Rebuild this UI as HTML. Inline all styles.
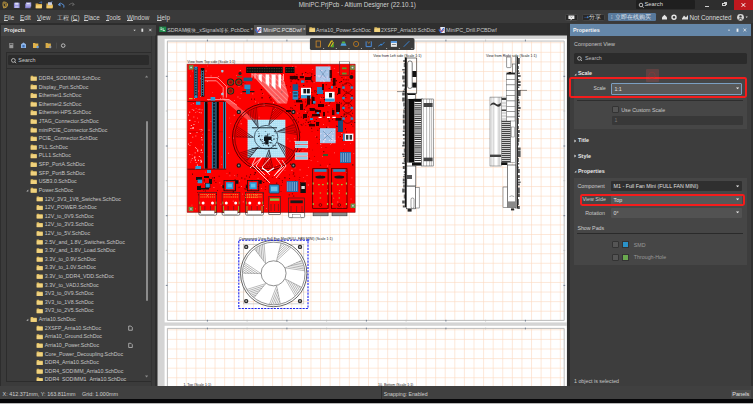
<!DOCTYPE html>
<html><head><meta charset="utf-8">
<style>
*{margin:0;padding:0;box-sizing:border-box}
html,body{width:753px;height:404px;overflow:hidden;background:#2d2d2d;font-family:"Liberation Sans",sans-serif;color:#d6d6d6}
.a{position:absolute}
.t{position:absolute;white-space:nowrap;line-height:1}
</style></head><body>
<!-- title bar -->
<div class="a" style="left:0;top:0;width:753px;height:9.8px;background:#2e2e2e"></div>
<div class="t" style="left:298.7px;top:2.2px;font-size:6.3px;color:#d2d2d2">MiniPC.PrjPcb - Altium Designer (22.10.1)</div>
<!-- title icons -->
<svg class="a" style="left:0;top:0" width="80" height="10" viewBox="0 0 80 10">
 <path d="M3.4 2 Q7.8 2.2 7.6 5 Q7.4 7.8 3.6 8 M4.4 3.4 Q6.4 3.8 6.2 5.1 Q6 6.4 4.4 6.6 M3.2 2.2 Q2.6 5 3.6 7.8" stroke="#cfa440" stroke-width="0.95" fill="none"/>
 <rect x="13.9" y="2.7" width="5.7" height="5.3" fill="#8f8cd8"/><rect x="15.1" y="2.7" width="3.3" height="2" fill="#dcdcf4"/><rect x="15" y="5.6" width="3.5" height="2.4" fill="#b8b6ea"/>
 <rect x="25.2" y="3.6" width="5.4" height="4.6" fill="#8884d0"/><rect x="26" y="2.4" width="5.2" height="4.2" fill="#a9a6e4"/><rect x="26.8" y="3" width="3" height="1.2" fill="#e4e4f6"/>
 <path d="M35.6 3.4h2.4l.6.7h3.4v4.1h-6.4z" fill="#d9ad4a"/><path d="M36 5.2h6.2l-.8 3h-5.6z" fill="#f2d07a"/><path d="M39.4 2.6 L41.8 1.8 L41.4 3.6" stroke="#4a7ac8" stroke-width="0.7" fill="none"/>
 <path d="M46.4 3.6h2.4l.6.7h3.4v4h-6.4z" fill="#d0a848"/><rect x="48" y="2.2" width="4" height="3.2" fill="#c8cce0"/><path d="M46.8 5.4h6.2l-.8 2.8h-5.6z" fill="#eec666"/><path d="M50.6 2.2 L52.6 1.4" stroke="#4a7ac8" stroke-width="0.6"/>
 <path d="M58.8 4.6 Q61.8 2.2 64 5.4 L63.8 7.6 M58.4 4.8 l1.9-2.1 M58.4 4.8 l2.3 1" stroke="#5a94dc" stroke-width="1" fill="none"/>
 <path d="M74 4.4 Q71 2.2 68.8 5 M74.3 4.6 l-1.8-2 M74.3 4.6 l-2.2 .9" stroke="#666" stroke-width="0.9" fill="none"/>
</svg>
<!-- search in title -->
<div class="a" style="left:636px;top:0;width:59px;height:9.3px;background:#1f1f1f;border-radius:1px"></div>
<svg class="a" style="left:638px;top:1.5px" width="6" height="7"><circle cx="3" cy="3" r="1.8" stroke="#ddd" stroke-width="0.8" fill="none"/><path d="M4.3 4.4 L5.6 5.8" stroke="#ddd" stroke-width="0.8"/></svg>
<div class="t" style="left:644.5px;top:2px;font-size:5.8px;color:#dcdcdc">Search</div>
<div class="a" style="left:705px;top:6.4px;width:4px;height:0.9px;background:#cfcfcf"></div>
<div class="a" style="left:722.4px;top:2.7px;width:4px;height:3.6px;border:0.8px solid #cfcfcf"></div>
<div class="a" style="left:723.6px;top:1.9px;width:3.6px;height:3.2px;border-top:0.8px solid #cfcfcf;border-right:0.8px solid #cfcfcf"></div>
<div class="a" style="left:734px;top:0;width:19px;height:10.5px;background:#c0181e"></div>
<svg class="a" style="left:734px;top:0" width="19" height="11"><path d="M7.6 3.2 L11.2 6.8 M11.2 3.2 L7.6 6.8" stroke="#fff" stroke-width="1"/></svg>

<!-- menu bar -->
<div class="a" style="left:0;top:9.8px;width:753px;height:13.2px;background:#3a3a3a"></div>
<div class="t" style="left:4px;top:14.6px;font-size:6.3px;color:#d2d2d2"><u style="text-decoration-thickness:0.45px;text-underline-offset:0.35px">F</u>ile</div>
<div class="t" style="left:20px;top:14.6px;font-size:6.3px;color:#d2d2d2"><u style="text-decoration-thickness:0.45px;text-underline-offset:0.35px">E</u>dit</div>
<div class="t" style="left:37px;top:14.6px;font-size:6.3px;color:#d2d2d2"><u style="text-decoration-thickness:0.45px;text-underline-offset:0.35px">V</u>iew</div>
<div class="t" style="left:57px;top:14.6px;font-size:6.3px;color:#d2d2d2">工程 (<u style="text-decoration-thickness:0.45px;text-underline-offset:0.35px">C</u>)</div>
<div class="t" style="left:84px;top:14.6px;font-size:6.3px;color:#d2d2d2"><u style="text-decoration-thickness:0.45px;text-underline-offset:0.35px">P</u>lace</div>
<div class="t" style="left:106px;top:14.6px;font-size:6.3px;color:#d2d2d2"><u style="text-decoration-thickness:0.45px;text-underline-offset:0.35px">T</u>ools</div>
<div class="t" style="left:127px;top:14.6px;font-size:6.3px;color:#d2d2d2"><u style="text-decoration-thickness:0.45px;text-underline-offset:0.35px">W</u>indow</div>
<div class="t" style="left:157px;top:14.6px;font-size:6.3px;color:#d2d2d2"><u style="text-decoration-thickness:0.45px;text-underline-offset:0.35px">H</u>elp</div>
<!-- menu right -->
<div class="a" style="left:565.3px;top:13.6px;width:13px;height:7.6px;background:#282828;border:0.6px solid #474747;border-radius:1.2px"></div>
<svg class="a" style="left:565.3px;top:13.6px" width="13" height="8"><path d="M3.4 1.6h6v3.4H7.2L5.6 6.4V5H3.4z" fill="#ececec"/><path d="M5.6 2.6l.8.9.8-.9" stroke="#333" stroke-width="0.5" fill="none"/></svg>
<div class="a" style="left:582px;top:13.6px;width:22.6px;height:7.6px;background:#282828;border:0.6px solid #444;border-radius:1.2px"></div>
<div class="t" style="left:584px;top:14.6px;font-size:5.6px;color:#d8d8d8"><span style="color:#5a9be0">➝</span>分享</div>
<div class="a" style="left:608px;top:13.3px;width:47.6px;height:8px;background:#58799c;border-radius:1.2px"></div>
<div class="t" style="left:611px;top:14.6px;font-size:5.6px;color:#e0e6ee">⁝ 立即在线购买</div>
<svg class="a" style="left:660px;top:13px" width="20" height="8"><path d="M2 4.2 L4.5 1.8 L7 4.2 V6.6 H2z" fill="#e6e6e6"/><circle cx="14" cy="4.2" r="2" fill="none" stroke="#e6e6e6" stroke-width="1.4"/></svg>
<svg class="a" style="left:681px;top:13px" width="8" height="8"><path d="M1 5.6 L3 2.4 L5 4.4 L7 2 V6.4 H1z" fill="#e0e0e0"/></svg>
<div class="t" style="left:689.5px;top:14.5px;font-size:6.3px;color:#dcdcdc">Not Connected</div>
<svg class="a" style="left:736px;top:12.5px" width="14" height="9"><circle cx="4.5" cy="4.3" r="3.4" fill="#d8d8d8"/><circle cx="4.5" cy="3.4" r="1.2" fill="#3a3a3a"/><path d="M2.6 6.4 Q4.5 4.6 6.4 6.4" stroke="#3a3a3a" stroke-width="1" fill="none"/><path d="M9.6 3.6 L11.8 3.6 L10.7 5z" fill="#d8d8d8"/></svg>

<!-- LEFT PANEL -->
<div class="a" style="left:1px;top:24.5px;width:155px;height:11.5px;background:#454545"></div>
<div class="t" style="left:4px;top:28.2px;font-size:5.4px;font-weight:bold;color:#e4e4e4">Projects</div>
<svg class="a" style="left:130px;top:26px" width="28" height="9"><path d="M3.4 3.8 h2.4 l-1.2 1.3z" fill="#ddd"/><rect x="11.4" y="2.6" width="1.8" height="3.2" fill="#ddd"/><path d="M19.2 2.8 L21.4 5.2 M21.4 2.8 L19.2 5.2" stroke="#ddd" stroke-width="0.75"/></svg>
<div class="a" style="left:1px;top:36px;width:155px;height:350px;background:#3b3b3b"></div>
<svg class="a" style="left:0;top:37px" width="70" height="14">
 <rect x="9.3" y="6" width="4" height="5.2" fill="#9a9a9a"/><rect x="10" y="6.6" width="2.6" height="1.4" fill="#555"/>
 <path d="M21 7.2 L23.5 5.6 L26 7.2 V11 H21z" fill="#8fb5e6"/><rect x="22.4" y="8" width="2.2" height="2.4" fill="#3d6fb8"/>
 <path d="M33 6h2l.5.6h2.8v4.4H33z" fill="#e0b24a"/><circle cx="37.6" cy="10" r="1.2" fill="#6aa0e0"/>
 <path d="M45.6 6h2l.5.6h2.8v4.4h-5.3z" fill="#d8ac48"/><circle cx="50.2" cy="10" r="1.2" fill="#999"/>
 <rect x="56" y="5.6" width="0.6" height="6" fill="#555"/>
 <circle cx="63.2" cy="8.6" r="1.8" fill="none" stroke="#c8c8c8" stroke-width="0.9"/>
</svg>
<div class="a" style="left:5.5px;top:52px;width:146px;height:330px;border:0.8px solid #2c2c2c"></div>
<div class="a" style="left:8px;top:55px;width:141px;height:10.4px;background:#2b2b2b;border-radius:1.5px"></div>
<svg class="a" style="left:10px;top:56.5px" width="8" height="8"><circle cx="3.4" cy="3.4" r="1.9" stroke="#ccc" stroke-width="0.8" fill="none"/><path d="M4.7 4.7 L6.2 6.2" stroke="#ccc" stroke-width="0.8"/></svg>
<div class="t" style="left:18.3px;top:58px;font-size:5.4px;color:#c9c9c9">Search</div>
<div class="a" style="left:6px;top:68.2px;width:145px;height:0.8px;background:#2c2c2c"></div>
<div class="a" style="left:6.3px;top:69px;width:138px;height:312.3px;overflow:hidden">
<svg class="a" style="left:0;top:0" width="138" height="313">
<path d="M24.7 6.85h2.2l.5.6h3.3v4.3h-6z" fill="#d9b85c"/><rect x="24.7" y="8.05" width="6" height="3.5" fill="#f0d27e"/>
<path d="M24.7 15.46h2.2l.5.6h3.3v4.3h-6z" fill="#d9b85c"/><rect x="24.7" y="16.66" width="6" height="3.5" fill="#f0d27e"/>
<path d="M24.7 24.08h2.2l.5.6h3.3v4.3h-6z" fill="#d9b85c"/><rect x="24.7" y="25.28" width="6" height="3.5" fill="#f0d27e"/>
<path d="M24.7 32.69h2.2l.5.6h3.3v4.3h-6z" fill="#d9b85c"/><rect x="24.7" y="33.89" width="6" height="3.5" fill="#f0d27e"/>
<path d="M24.7 41.31h2.2l.5.6h3.3v4.3h-6z" fill="#d9b85c"/><rect x="24.7" y="42.51" width="6" height="3.5" fill="#f0d27e"/>
<path d="M24.7 49.92h2.2l.5.6h3.3v4.3h-6z" fill="#d9b85c"/><rect x="24.7" y="51.12" width="6" height="3.5" fill="#f0d27e"/>
<path d="M24.7 58.53h2.2l.5.6h3.3v4.3h-6z" fill="#d9b85c"/><rect x="24.7" y="59.73" width="6" height="3.5" fill="#f0d27e"/>
<path d="M24.7 67.15h2.2l.5.6h3.3v4.3h-6z" fill="#d9b85c"/><rect x="24.7" y="68.35" width="6" height="3.5" fill="#f0d27e"/>
<path d="M24.7 75.76h2.2l.5.6h3.3v4.3h-6z" fill="#d9b85c"/><rect x="24.7" y="76.96" width="6" height="3.5" fill="#f0d27e"/>
<path d="M24.7 84.38h2.2l.5.6h3.3v4.3h-6z" fill="#d9b85c"/><rect x="24.7" y="85.58" width="6" height="3.5" fill="#f0d27e"/>
<path d="M24.7 92.99h2.2l.5.6h3.3v4.3h-6z" fill="#d9b85c"/><rect x="24.7" y="94.19" width="6" height="3.5" fill="#f0d27e"/>
<path d="M24.7 101.60h2.2l.5.6h3.3v4.3h-6z" fill="#d9b85c"/><rect x="24.7" y="102.80" width="6" height="3.5" fill="#f0d27e"/>
<path d="M24.7 110.22h2.2l.5.6h3.3v4.3h-6z" fill="#d9b85c"/><rect x="24.7" y="111.42" width="6" height="3.5" fill="#f0d27e"/>
<path d="M24.7 118.83h2.2l.5.6h3.3v4.3h-6z" fill="#d9b85c"/><rect x="24.7" y="120.03" width="6" height="3.5" fill="#f0d27e"/>
<path d="M20.3 122.43l2-2v2z" fill="#bdbdbd"/>
<path d="M30.7 127.45h2.2l.5.6h3.3v4.3h-6z" fill="#d9b85c"/><rect x="30.7" y="128.65" width="6" height="3.5" fill="#f0d27e"/>
<path d="M30.7 136.06h2.2l.5.6h3.3v4.3h-6z" fill="#d9b85c"/><rect x="30.7" y="137.26" width="6" height="3.5" fill="#f0d27e"/>
<path d="M30.7 144.67h2.2l.5.6h3.3v4.3h-6z" fill="#d9b85c"/><rect x="30.7" y="145.87" width="6" height="3.5" fill="#f0d27e"/>
<path d="M30.7 153.29h2.2l.5.6h3.3v4.3h-6z" fill="#d9b85c"/><rect x="30.7" y="154.49" width="6" height="3.5" fill="#f0d27e"/>
<path d="M30.7 161.90h2.2l.5.6h3.3v4.3h-6z" fill="#d9b85c"/><rect x="30.7" y="163.10" width="6" height="3.5" fill="#f0d27e"/>
<path d="M30.7 170.52h2.2l.5.6h3.3v4.3h-6z" fill="#d9b85c"/><rect x="30.7" y="171.72" width="6" height="3.5" fill="#f0d27e"/>
<path d="M30.7 179.13h2.2l.5.6h3.3v4.3h-6z" fill="#d9b85c"/><rect x="30.7" y="180.33" width="6" height="3.5" fill="#f0d27e"/>
<path d="M30.7 187.74h2.2l.5.6h3.3v4.3h-6z" fill="#d9b85c"/><rect x="30.7" y="188.94" width="6" height="3.5" fill="#f0d27e"/>
<path d="M30.7 196.36h2.2l.5.6h3.3v4.3h-6z" fill="#d9b85c"/><rect x="30.7" y="197.56" width="6" height="3.5" fill="#f0d27e"/>
<path d="M30.7 204.97h2.2l.5.6h3.3v4.3h-6z" fill="#d9b85c"/><rect x="30.7" y="206.17" width="6" height="3.5" fill="#f0d27e"/>
<path d="M30.7 213.59h2.2l.5.6h3.3v4.3h-6z" fill="#d9b85c"/><rect x="30.7" y="214.79" width="6" height="3.5" fill="#f0d27e"/>
<path d="M30.7 222.20h2.2l.5.6h3.3v4.3h-6z" fill="#d9b85c"/><rect x="30.7" y="223.40" width="6" height="3.5" fill="#f0d27e"/>
<path d="M30.7 230.81h2.2l.5.6h3.3v4.3h-6z" fill="#d9b85c"/><rect x="30.7" y="232.01" width="6" height="3.5" fill="#f0d27e"/>
<path d="M30.7 239.43h2.2l.5.6h3.3v4.3h-6z" fill="#d9b85c"/><rect x="30.7" y="240.63" width="6" height="3.5" fill="#f0d27e"/>
<path d="M24.7 248.04h2.2l.5.6h3.3v4.3h-6z" fill="#d9b85c"/><rect x="24.7" y="249.24" width="6" height="3.5" fill="#f0d27e"/>
<path d="M20.3 251.64l2-2v2z" fill="#bdbdbd"/>
<path d="M30.7 256.66h2.2l.5.6h3.3v4.3h-6z" fill="#d9b85c"/><rect x="30.7" y="257.86" width="6" height="3.5" fill="#f0d27e"/>
<path d="M122.7 257.06h2.2l1.4 1.4v2.8h-3.6z" fill="none" stroke="#cfcfcf" stroke-width="0.7"/>
<path d="M30.7 265.27h2.2l.5.6h3.3v4.3h-6z" fill="#d9b85c"/><rect x="30.7" y="266.47" width="6" height="3.5" fill="#f0d27e"/>
<path d="M30.7 273.88h2.2l.5.6h3.3v4.3h-6z" fill="#d9b85c"/><rect x="30.7" y="275.08" width="6" height="3.5" fill="#f0d27e"/>
<path d="M122.7 274.28h2.2l1.4 1.4v2.8h-3.6z" fill="none" stroke="#cfcfcf" stroke-width="0.7"/>
<path d="M30.7 282.50h2.2l.5.6h3.3v4.3h-6z" fill="#d9b85c"/><rect x="30.7" y="283.70" width="6" height="3.5" fill="#f0d27e"/>
<path d="M30.7 291.11h2.2l.5.6h3.3v4.3h-6z" fill="#d9b85c"/><rect x="30.7" y="292.31" width="6" height="3.5" fill="#f0d27e"/>
<path d="M30.7 299.73h2.2l.5.6h3.3v4.3h-6z" fill="#d9b85c"/><rect x="30.7" y="300.93" width="6" height="3.5" fill="#f0d27e"/>
<path d="M30.7 308.34h2.2l.5.6h3.3v4.3h-6z" fill="#d9b85c"/><rect x="30.7" y="309.54" width="6" height="3.5" fill="#f0d27e"/>
</svg>
<div class="t" style="left:32.5px;top:6.90px;font-size:5.25px;color:#c6c6c6">DDR4_SODIMM2.SchDoc</div>
<div class="t" style="left:32.5px;top:15.51px;font-size:5.25px;color:#c6c6c6">Display_Port.SchDoc</div>
<div class="t" style="left:32.5px;top:24.13px;font-size:5.25px;color:#c6c6c6">Ethernet1.SchDoc</div>
<div class="t" style="left:32.5px;top:32.74px;font-size:5.25px;color:#c6c6c6">Ethernet2.SchDoc</div>
<div class="t" style="left:32.5px;top:41.36px;font-size:5.25px;color:#c6c6c6">Ethernet-HPS.SchDoc</div>
<div class="t" style="left:32.5px;top:49.97px;font-size:5.25px;color:#c6c6c6">JTAG_Connector.SchDoc</div>
<div class="t" style="left:32.5px;top:58.58px;font-size:5.25px;color:#c6c6c6">miniPCIE_Connector.SchDoc</div>
<div class="t" style="left:32.5px;top:67.20px;font-size:5.25px;color:#c6c6c6">PCIE_Connector.SchDoc</div>
<div class="t" style="left:32.5px;top:75.81px;font-size:5.25px;color:#c6c6c6">PLL.SchDoc</div>
<div class="t" style="left:32.5px;top:84.43px;font-size:5.25px;color:#c6c6c6">PLL1.SchDoc</div>
<div class="t" style="left:32.5px;top:93.04px;font-size:5.25px;color:#c6c6c6">SFP_PortA.SchDoc</div>
<div class="t" style="left:32.5px;top:101.65px;font-size:5.25px;color:#c6c6c6">SFP_PortB.SchDoc</div>
<div class="t" style="left:32.5px;top:110.27px;font-size:5.25px;color:#c6c6c6">USB3.0.SchDoc</div>
<div class="t" style="left:32.5px;top:118.88px;font-size:5.25px;color:#c6c6c6">Power.SchDoc</div>
<div class="t" style="left:38.5px;top:127.50px;font-size:5.25px;color:#c6c6c6">12V_3V3_1V8_Swiches.SchDoc</div>
<div class="t" style="left:38.5px;top:136.11px;font-size:5.25px;color:#c6c6c6">12V_POWER.SchDoc</div>
<div class="t" style="left:38.5px;top:144.72px;font-size:5.25px;color:#c6c6c6">12V_to_0V9.SchDoc</div>
<div class="t" style="left:38.5px;top:153.34px;font-size:5.25px;color:#c6c6c6">12V_to_3V3.SchDoc</div>
<div class="t" style="left:38.5px;top:161.95px;font-size:5.25px;color:#c6c6c6">12V_to_5V.SchDoc</div>
<div class="t" style="left:38.5px;top:170.57px;font-size:5.25px;color:#c6c6c6">2.5V_and_1.8V_Switches.SchDoc</div>
<div class="t" style="left:38.5px;top:179.18px;font-size:5.25px;color:#c6c6c6">3.3V_and_1.8V_Load.SchDoc</div>
<div class="t" style="left:38.5px;top:187.79px;font-size:5.25px;color:#c6c6c6">3.3V_to_0.9V.SchDoc</div>
<div class="t" style="left:38.5px;top:196.41px;font-size:5.25px;color:#c6c6c6">3.3V_to_1.0V.SchDoc</div>
<div class="t" style="left:38.5px;top:205.02px;font-size:5.25px;color:#c6c6c6">3.3V_to_DDR4_VDD.SchDoc</div>
<div class="t" style="left:38.5px;top:213.64px;font-size:5.25px;color:#c6c6c6">3.3V_to_VADJ.SchDoc</div>
<div class="t" style="left:38.5px;top:222.25px;font-size:5.25px;color:#c6c6c6">3V3_to_0V9.SchDoc</div>
<div class="t" style="left:38.5px;top:230.86px;font-size:5.25px;color:#c6c6c6">3V3_to_1V8.SchDoc</div>
<div class="t" style="left:38.5px;top:239.48px;font-size:5.25px;color:#c6c6c6">3V3_to_2V5.SchDoc</div>
<div class="t" style="left:32.5px;top:248.09px;font-size:5.25px;color:#c6c6c6">Arria10.SchDoc</div>
<div class="t" style="left:38.5px;top:256.71px;font-size:5.25px;color:#c6c6c6">2XSFP_Arria10.SchDoc</div>
<div class="t" style="left:38.5px;top:265.32px;font-size:5.25px;color:#c6c6c6">Arria10_Ground.SchDoc</div>
<div class="t" style="left:38.5px;top:273.93px;font-size:5.25px;color:#c6c6c6">Arria10_Power.SchDoc</div>
<div class="t" style="left:38.5px;top:282.55px;font-size:5.25px;color:#c6c6c6">Core_Power_Decoupling.SchDoc</div>
<div class="t" style="left:38.5px;top:291.16px;font-size:5.25px;color:#c6c6c6">DDR4_Arria10.SchDoc</div>
<div class="t" style="left:38.5px;top:299.78px;font-size:5.25px;color:#c6c6c6">DDR4_SODIMM_Arria10.SchDoc</div>
<div class="t" style="left:38.5px;top:308.39px;font-size:5.25px;color:#c6c6c6">DDR4_SODIMM1_Arria10.SchDoc</div>
</div>
<!-- scrollbar -->
<svg class="a" style="left:144px;top:74px" width="6" height="5"><path d="M1 3.6 L2.6 1.6 L4.2 3.6z" fill="#8a8a8a"/></svg>
<div class="a" style="left:145.6px;top:120.6px;width:2.6px;height:180.4px;background:#8c8c8c;border-radius:1.3px"></div>
<svg class="a" style="left:144px;top:374px" width="6" height="5"><path d="M1 1.4 L2.6 3.4 L4.2 1.4z" fill="#8a8a8a"/></svg>
<div class="a" style="left:150.8px;top:36px;width:0.8px;height:350px;background:#333"></div>

<!-- TABS -->
<div class="a" style="left:156px;top:23px;width:411px;height:12.5px;background:#2f2f2f"></div>
<div class="a" style="left:254.2px;top:24.9px;width:52.2px;height:10.6px;background:#555"></div>
<svg class="a" style="left:156px;top:23px" width="411" height="13">
 <rect x="3.2" y="3.6" width="7" height="5.4" fill="#1e8a4a"/><path d="M4.4 5h1.6M4.4 6.6h1.6M7 5v2.6h2" stroke="#e6f4ea" stroke-width="0.8" fill="none"/>
 <rect x="100.9" y="4" width="4.5" height="6" fill="#e8ecf8"/><path d="M99.4 6.4 L101.4 9.4 L104.4 5.2" stroke="#3a68d0" stroke-width="1.2" fill="none"/><path d="M100.6 5.6 L102.6 9 L105 6.6" stroke="#d04a5a" stroke-width="0.7" fill="none"/>
 <path d="M153.4 4.2h2.2l.5.6h3v4.2h-5.7z" fill="#d9b85c"/><rect x="153.4" y="5.6" width="5.7" height="3.4" fill="#f0d27e"/>
 <path d="M218.4 4.2h2.2l.5.6h3v4.2h-5.7z" fill="#d9b85c"/><rect x="218.4" y="5.6" width="5.7" height="3.4" fill="#f0d27e"/>
 <rect x="284.3" y="4" width="4.5" height="6" fill="#e8ecf8"/><path d="M282.8 6.4 L284.8 9.4 L287.8 5.2" stroke="#3a68d0" stroke-width="1.2" fill="none"/><path d="M284 5.6 L286 9 L288.4 6.6" stroke="#d04a5a" stroke-width="0.7" fill="none"/>
</svg>
<div class="t" style="left:167.2px;top:27.6px;font-size:5.3px;color:#c8c8c8">SDRAM模块_xSignals等长.PcbDoc *</div>
<div class="t" style="left:263.2px;top:27.6px;font-size:5.3px;color:#e6e6e6">MiniPC.PCBDwf *</div>
<div class="t" style="left:316px;top:27.6px;font-size:5.3px;color:#c8c8c8">Arria10_Power.SchDoc</div>
<div class="t" style="left:381px;top:27.6px;font-size:5.1px;color:#c8c8c8">2XSFP_Arria10.SchDoc</div>
<div class="t" style="left:446px;top:27.6px;font-size:5.3px;color:#c8c8c8">MiniPC_Drill.PCBDwf</div>

<!-- CANVAS -->
<svg class="a" style="left:0;top:0" width="753" height="404" viewBox="0 0 753 404">
 <rect x="155" y="35.5" width="2.5" height="350.7" fill="#2f2f2f"/>
 <rect x="157.5" y="35.5" width="409.5" height="350.7" fill="#d4d4d4"/>
 <rect x="164.6" y="38.9" width="402" height="283.5" fill="#fff"/>
 <rect x="164.6" y="325.8" width="402" height="61" fill="#fff"/>
<path d="M176.70 41.5V320.4M176.70 328.4V386M186.29 41.5V320.4M186.29 328.4V386M195.88 41.5V320.4M195.88 328.4V386M205.47 41.5V320.4M205.47 328.4V386M215.06 41.5V320.4M215.06 328.4V386M224.65 41.5V320.4M224.65 328.4V386M234.24 41.5V320.4M234.24 328.4V386M243.83 41.5V320.4M243.83 328.4V386M253.42 41.5V320.4M253.42 328.4V386M263.01 41.5V320.4M263.01 328.4V386M272.60 41.5V320.4M272.60 328.4V386M282.19 41.5V320.4M282.19 328.4V386M291.78 41.5V320.4M291.78 328.4V386M301.37 41.5V320.4M301.37 328.4V386M310.96 41.5V320.4M310.96 328.4V386M320.55 41.5V320.4M320.55 328.4V386M330.14 41.5V320.4M330.14 328.4V386M339.73 41.5V320.4M339.73 328.4V386M349.32 41.5V320.4M349.32 328.4V386M358.91 41.5V320.4M358.91 328.4V386M368.50 41.5V320.4M368.50 328.4V386M378.09 41.5V320.4M378.09 328.4V386M387.68 41.5V320.4M387.68 328.4V386M397.27 41.5V320.4M397.27 328.4V386M406.86 41.5V320.4M406.86 328.4V386M416.45 41.5V320.4M416.45 328.4V386M426.04 41.5V320.4M426.04 328.4V386M435.63 41.5V320.4M435.63 328.4V386M445.22 41.5V320.4M445.22 328.4V386M454.81 41.5V320.4M454.81 328.4V386M464.40 41.5V320.4M464.40 328.4V386M473.99 41.5V320.4M473.99 328.4V386M483.58 41.5V320.4M483.58 328.4V386M493.17 41.5V320.4M493.17 328.4V386M502.76 41.5V320.4M502.76 328.4V386M512.35 41.5V320.4M512.35 328.4V386M521.94 41.5V320.4M521.94 328.4V386M531.53 41.5V320.4M531.53 328.4V386M541.12 41.5V320.4M541.12 328.4V386M550.71 41.5V320.4M550.71 328.4V386M560.30 41.5V320.4M560.30 328.4V386M167.4 42.71H564.2M167.4 52.30H564.2M167.4 61.89H564.2M167.4 71.48H564.2M167.4 81.07H564.2M167.4 90.66H564.2M167.4 100.25H564.2M167.4 109.84H564.2M167.4 119.43H564.2M167.4 129.02H564.2M167.4 138.61H564.2M167.4 148.20H564.2M167.4 157.79H564.2M167.4 167.38H564.2M167.4 176.97H564.2M167.4 186.56H564.2M167.4 196.15H564.2M167.4 205.74H564.2M167.4 215.33H564.2M167.4 224.92H564.2M167.4 234.51H564.2M167.4 244.10H564.2M167.4 253.69H564.2M167.4 263.28H564.2M167.4 272.87H564.2M167.4 282.46H564.2M167.4 292.05H564.2M167.4 301.64H564.2M167.4 311.23H564.2M167.4 329.81H564.2M167.4 339.40H564.2M167.4 348.99H564.2M167.4 358.58H564.2M167.4 368.17H564.2M167.4 377.76H564.2" stroke="#fbdac2" stroke-width="0.62" fill="none"/>
 <path d="M167.4 41.05V320.4H564.2V41.05z M167.4 386V328.4H564.2V386" fill="none" stroke="#b4b4b4" stroke-width="0.9"/>
<text x="187.3" y="63.1" font-size="3.55" fill="#1a1a1a" font-family="Liberation Sans">View from Top side (Scale 1:1)</text>
<rect x="198.9" y="192.5" width="17.8" height="22.7" rx="1.2" fill="#fff" stroke="#2a2a2a" stroke-width="0.6"/>
<rect x="222.1" y="192.5" width="17.8" height="22.7" rx="1.2" fill="#fff" stroke="#2a2a2a" stroke-width="0.6"/>
<rect x="245.6" y="192.5" width="17.8" height="22.7" rx="1.2" fill="#fff" stroke="#2a2a2a" stroke-width="0.6"/>
<rect x="288.6" y="198" width="16" height="19.6" rx="1" fill="#fff" stroke="#2a2a2a" stroke-width="0.6"/>
<rect x="268.8" y="196.6" width="11.8" height="17.8" fill="#fff" stroke="#2a2a2a" stroke-width="0.6"/>
<rect x="313.09999999999997" y="208.6" width="15" height="7.2" fill="#8c8c8c" stroke="#3a3a3a" stroke-width="0.6"/>
<rect x="313.9" y="209.4" width="13.4" height="1.6" fill="#b4b4b4"/>
<rect x="332.0" y="208.6" width="15" height="7.2" fill="#8c8c8c" stroke="#3a3a3a" stroke-width="0.6"/>
<rect x="332.8" y="209.4" width="13.4" height="1.6" fill="#b4b4b4"/>
<rect x="187.2" y="64.2" width="168" height="148.2" fill="#fd0000"/>
<path d="M187.2 64.2H355.2V212.4H187.2Z" fill="none" stroke="#700" stroke-width="0.5"/>
<rect x="198.9" y="192.5" width="17.8" height="19.9" fill="#fd0000" stroke="#2a2a2a" stroke-width="0.6"/>
<path d="M200.4 194.6h14.8M200.4 197h14.8" stroke="#e8c040" stroke-width="0.8" stroke-dasharray="1.2 0.7"/>
<circle cx="203.1" cy="203" r="1.5" fill="#fff"/><circle cx="212.5" cy="203" r="1.5" fill="#fff"/>
<path d="M199.70000000000002 201.6v2.6M215.9 201.6v2.6M200.3 206v6M215.3 206v6" stroke="#8ab030" stroke-width="0.9"/>
<path d="M204.9 206v6M210.5 206v6" stroke="#2a2a2a" stroke-width="0.5"/>
<rect x="200.9" y="210.6" width="13.6" height="3.6" fill="#fff" stroke="#444" stroke-width="0.3"/>
<rect x="222.1" y="192.5" width="17.8" height="19.9" fill="#fd0000" stroke="#2a2a2a" stroke-width="0.6"/>
<path d="M223.6 194.6h14.8M223.6 197h14.8" stroke="#e8c040" stroke-width="0.8" stroke-dasharray="1.2 0.7"/>
<circle cx="226.29999999999998" cy="203" r="1.5" fill="#fff"/><circle cx="235.7" cy="203" r="1.5" fill="#fff"/>
<path d="M222.9 201.6v2.6M239.1 201.6v2.6M223.5 206v6M238.5 206v6" stroke="#8ab030" stroke-width="0.9"/>
<path d="M228.1 206v6M233.7 206v6" stroke="#2a2a2a" stroke-width="0.5"/>
<rect x="224.1" y="210.6" width="13.6" height="3.6" fill="#fff" stroke="#444" stroke-width="0.3"/>
<rect x="245.6" y="192.5" width="17.8" height="19.9" fill="#fd0000" stroke="#2a2a2a" stroke-width="0.6"/>
<path d="M247.1 194.6h14.8M247.1 197h14.8" stroke="#e8c040" stroke-width="0.8" stroke-dasharray="1.2 0.7"/>
<circle cx="249.79999999999998" cy="203" r="1.5" fill="#fff"/><circle cx="259.2" cy="203" r="1.5" fill="#fff"/>
<path d="M246.4 201.6v2.6M262.6 201.6v2.6M247.0 206v6M262.0 206v6" stroke="#8ab030" stroke-width="0.9"/>
<path d="M251.6 206v6M257.2 206v6" stroke="#2a2a2a" stroke-width="0.5"/>
<rect x="247.6" y="210.6" width="13.6" height="3.6" fill="#fff" stroke="#444" stroke-width="0.3"/>
<path d="M341.4 133.0h0.9v0.9h-0.9zM219.5 182.4h0.7v0.9h-0.7zM289.9 92.2h0.7v0.7h-0.7zM211.5 143.6h0.9v0.9h-0.9zM195.0 208.4h0.7v0.9h-0.7zM310.7 159.9h0.9v0.5h-0.9zM326.1 74.2h0.5v0.5h-0.5zM334.0 152.5h0.7v0.7h-0.7zM261.1 188.0h0.9v0.5h-0.9zM294.3 138.0h0.9v0.5h-0.9zM263.9 105.6h0.9v0.5h-0.9zM305.5 111.0h0.5v0.9h-0.5zM236.0 75.3h0.5v0.7h-0.5zM205.9 107.5h0.5v0.5h-0.5zM328.7 65.1h0.5v0.5h-0.5zM266.0 208.1h0.7v0.7h-0.7zM200.1 156.9h0.9v0.7h-0.9zM243.9 110.4h0.5v0.7h-0.5zM313.8 82.2h0.5v0.9h-0.5zM204.8 73.7h0.7v0.5h-0.7zM301.2 92.5h0.9v0.5h-0.9zM351.6 177.4h0.7v0.9h-0.7zM352.3 65.1h0.9v0.7h-0.9zM353.7 67.9h0.5v0.7h-0.5zM353.3 152.9h0.9v0.5h-0.9zM195.0 86.4h0.7v0.7h-0.7zM189.6 154.1h0.7v0.7h-0.7zM200.2 78.2h0.9v0.9h-0.9zM228.3 152.8h0.7v0.9h-0.7zM263.2 205.0h0.7v0.9h-0.7zM210.5 121.4h0.9v0.5h-0.9zM239.6 98.3h0.9v0.5h-0.9zM308.4 88.1h0.9v0.9h-0.9zM220.6 203.7h0.7v0.9h-0.7zM201.0 71.9h0.5v0.5h-0.5zM273.1 102.3h0.9v0.9h-0.9zM338.2 136.7h0.9v0.5h-0.9zM342.3 207.7h0.5v0.5h-0.5zM267.6 160.4h0.9v0.9h-0.9zM200.3 96.0h0.5v0.9h-0.5zM190.8 104.3h0.7v0.5h-0.7zM198.0 90.7h0.7v0.9h-0.7zM283.0 84.2h0.7v0.5h-0.7zM335.9 208.2h0.9v0.9h-0.9zM302.7 150.3h0.5v0.9h-0.5zM193.8 67.6h0.7v0.9h-0.7zM239.8 69.9h0.9v0.9h-0.9zM200.4 74.8h0.7v0.7h-0.7zM210.7 75.6h0.7v0.9h-0.7zM249.1 71.5h0.9v0.9h-0.9zM304.8 180.8h0.7v0.7h-0.7zM202.1 134.1h0.5v0.7h-0.5zM344.7 69.4h0.7v0.9h-0.7zM190.4 161.7h0.7v0.9h-0.7zM190.1 75.5h0.5v0.9h-0.5zM207.2 102.6h0.7v0.9h-0.7zM242.8 201.4h0.9v0.9h-0.9zM273.4 110.3h0.5v0.7h-0.5zM191.7 204.8h0.5v0.7h-0.5zM317.5 161.4h0.7v0.7h-0.7zM336.8 118.7h0.5v0.9h-0.5zM289.6 140.7h0.7v0.9h-0.7zM342.4 137.8h0.5v0.7h-0.5zM255.2 101.6h0.9v0.7h-0.9zM321.4 175.2h0.5v0.5h-0.5zM240.5 84.9h0.7v0.7h-0.7zM327.0 188.9h0.9v0.5h-0.9zM345.7 105.4h0.5v0.5h-0.5zM262.8 105.2h0.5v0.7h-0.5zM299.6 169.6h0.9v0.7h-0.9zM241.2 186.0h0.7v0.9h-0.7zM194.9 168.5h0.9v0.7h-0.9zM239.3 180.6h0.5v0.9h-0.5zM210.6 131.4h0.5v0.7h-0.5zM227.4 85.6h0.5v0.9h-0.5zM207.1 80.9h0.9v0.9h-0.9zM294.2 118.8h0.5v0.9h-0.5zM220.9 185.3h0.7v0.5h-0.7zM306.6 175.2h0.9v0.9h-0.9zM194.0 98.1h0.7v0.9h-0.7zM303.8 141.0h0.9v0.5h-0.9zM253.3 180.6h0.5v0.5h-0.5zM256.1 195.3h0.7v0.5h-0.7zM262.8 93.7h0.5v0.7h-0.5zM279.3 160.3h0.9v0.7h-0.9zM265.0 160.1h0.5v0.5h-0.5zM307.8 184.5h0.9v0.9h-0.9zM208.5 100.4h0.7v0.5h-0.7zM350.2 143.4h0.7v0.7h-0.7zM339.1 189.9h0.7v0.9h-0.7zM201.7 129.4h0.9v0.7h-0.9zM315.5 136.2h0.5v0.5h-0.5zM322.3 74.4h0.5v0.5h-0.5zM276.5 165.2h0.5v0.7h-0.5zM212.7 140.4h0.9v0.9h-0.9zM327.4 165.6h0.7v0.9h-0.7zM345.6 77.6h0.5v0.7h-0.5zM275.4 107.4h0.9v0.9h-0.9zM294.1 141.3h0.9v0.7h-0.9zM239.7 120.7h0.9v0.5h-0.9zM238.5 85.6h0.9v0.9h-0.9zM233.3 137.7h0.7v0.9h-0.7zM207.0 65.7h0.7v0.5h-0.7zM277.4 71.4h0.7v0.9h-0.7zM321.0 147.2h0.7v0.5h-0.7zM302.7 74.6h0.9v0.7h-0.9zM256.7 204.7h0.7v0.7h-0.7zM228.9 137.0h0.7v0.7h-0.7zM337.5 201.6h0.7v0.9h-0.7zM240.7 93.0h0.9v0.5h-0.9zM341.6 83.9h0.5v0.5h-0.5zM220.2 98.2h0.9v0.7h-0.9zM241.5 116.9h0.9v0.7h-0.9zM205.4 171.7h0.5v0.9h-0.5zM291.5 169.8h0.9v0.9h-0.9zM333.9 68.4h0.9v0.7h-0.9zM325.0 154.9h0.9v0.5h-0.9zM331.4 143.0h0.5v0.9h-0.5zM223.9 144.3h0.9v0.5h-0.9zM226.6 173.2h0.7v0.5h-0.7zM240.4 111.0h0.5v0.5h-0.5zM317.2 93.4h0.5v0.5h-0.5zM335.6 84.4h0.5v0.7h-0.5zM344.2 144.3h0.9v0.5h-0.9zM221.3 156.7h0.5v0.5h-0.5zM221.4 164.6h0.7v0.5h-0.7zM305.0 157.7h0.7v0.9h-0.7zM353.8 186.6h0.5v0.7h-0.5zM205.6 70.5h0.9v0.9h-0.9zM212.3 91.9h0.5v0.5h-0.5zM327.5 209.6h0.9v0.5h-0.9zM284.2 84.6h0.9v0.7h-0.9zM200.9 79.1h0.7v0.7h-0.7zM258.8 116.8h0.5v0.9h-0.5zM194.8 94.2h0.7v0.7h-0.7zM341.0 153.3h0.5v0.9h-0.5zM319.5 112.3h0.5v0.9h-0.5zM333.4 197.7h0.7v0.9h-0.7zM287.5 138.6h0.7v0.7h-0.7zM234.4 82.0h0.9v0.5h-0.9zM323.2 124.2h0.7v0.9h-0.7zM303.3 177.0h0.5v0.7h-0.5zM222.3 92.0h0.7v0.7h-0.7zM265.8 66.5h0.7v0.9h-0.7zM337.8 72.2h0.7v0.9h-0.7zM237.6 96.5h0.7v0.9h-0.7zM218.2 76.2h0.9v0.7h-0.9zM294.6 167.4h0.7v0.9h-0.7zM191.8 154.8h0.9v0.5h-0.9zM230.6 123.6h0.5v0.5h-0.5zM295.6 66.6h0.7v0.7h-0.7zM233.8 114.8h0.9v0.9h-0.9zM328.5 79.5h0.7v0.9h-0.7zM200.6 152.2h0.5v0.7h-0.5zM342.4 88.4h0.7v0.5h-0.7zM330.0 144.1h0.9v0.5h-0.9zM235.2 123.2h0.7v0.7h-0.7zM232.8 200.7h0.9v0.9h-0.9zM312.1 68.9h0.5v0.9h-0.5zM195.1 87.9h0.9v0.7h-0.9zM196.8 111.0h0.7v0.5h-0.7zM284.6 170.6h0.7v0.5h-0.7zM320.4 97.7h0.9v0.7h-0.9zM229.7 175.3h0.5v0.9h-0.5zM204.3 183.3h0.7v0.5h-0.7zM350.5 184.2h0.9v0.9h-0.9zM207.1 156.1h0.7v0.5h-0.7zM221.8 72.6h0.9v0.5h-0.9zM208.6 129.7h0.9v0.7h-0.9zM263.6 103.3h0.9v0.9h-0.9zM257.6 178.6h0.9v0.5h-0.9zM346.1 172.2h0.5v0.7h-0.5zM206.9 195.3h0.9v0.9h-0.9zM328.5 105.1h0.9v0.9h-0.9zM308.4 167.1h0.5v0.9h-0.5zM234.3 100.0h0.5v0.9h-0.5zM350.6 198.7h0.9v0.5h-0.9zM292.3 66.4h0.7v0.7h-0.7zM192.5 70.6h0.5v0.9h-0.5zM234.2 175.3h0.9v0.5h-0.9zM223.0 115.2h0.9v0.5h-0.9zM327.2 75.9h0.5v0.7h-0.5zM322.3 156.1h0.5v0.7h-0.5zM258.4 102.7h0.5v0.7h-0.5zM213.5 187.1h0.9v0.7h-0.9zM236.3 175.8h0.5v0.7h-0.5zM296.5 149.8h0.7v0.7h-0.7zM201.0 77.1h0.9v0.9h-0.9zM268.5 165.1h0.7v0.5h-0.7zM200.6 96.1h0.9v0.9h-0.9zM201.6 109.4h0.9v0.9h-0.9zM242.4 193.7h0.5v0.7h-0.5zM297.1 112.8h0.5v0.7h-0.5zM305.7 148.1h0.9v0.7h-0.9zM260.7 182.2h0.7v0.7h-0.7zM240.7 123.3h0.9v0.9h-0.9zM229.2 117.8h0.7v0.5h-0.7zM252.3 93.5h0.9v0.7h-0.9zM320.3 143.9h0.9v0.9h-0.9zM217.4 78.1h0.7v0.7h-0.7zM322.8 97.3h0.5v0.9h-0.5zM214.3 108.2h0.5v0.9h-0.5zM327.7 126.7h0.9v0.9h-0.9z" fill="#ffd4d4" opacity="0.75"/>
<path d="M192.3 136.8h0.9v0.6h-0.9zM191.8 109.5h0.9v0.6h-0.9zM188.4 143.5h0.6v1.2h-0.6zM199.4 129.2h1.2v0.6h-1.2zM194.8 159.3h0.9v0.9h-0.9zM193.5 123.9h0.9v1.2h-0.9zM189.9 133.3h1.2v0.6h-1.2zM197.9 159.7h0.9v1.2h-0.9zM192.9 103.2h0.9v0.6h-0.9zM200.4 162.4h1.2v0.6h-1.2zM195.3 147.0h0.6v0.9h-0.6zM200.9 159.8h0.6v1.2h-0.6zM190.3 142.4h1.2v0.6h-1.2zM192.5 127.1h1.2v0.9h-1.2zM191.8 157.9h0.9v0.9h-0.9zM198.2 121.8h0.6v0.6h-0.6zM200.8 149.7h0.6v1.2h-0.6zM194.7 152.6h0.9v0.6h-0.9zM190.8 125.3h1.2v0.6h-1.2zM196.4 132.3h1.2v0.6h-1.2zM194.2 158.5h0.9v0.6h-0.9zM200.7 161.1h1.2v1.2h-1.2zM201.2 137.1h0.9v0.9h-0.9zM200.4 159.7h0.9v1.2h-0.9zM195.7 162.3h0.9v0.6h-0.9zM193.6 116.5h0.6v0.9h-0.6zM201.7 152.3h0.9v0.6h-0.9zM197.2 117.7h0.6v0.9h-0.6zM200.7 130.9h0.6v1.2h-0.6zM193.9 157.2h0.9v0.6h-0.9zM198.8 112.0h1.2v0.6h-1.2zM196.9 164.6h0.9v1.2h-0.9zM195.5 112.3h0.6v0.6h-0.6zM190.9 159.8h0.6v0.6h-0.6zM189.2 119.7h1.2v1.2h-1.2zM189.4 132.8h0.9v0.6h-0.9zM201.4 139.4h1.2v0.9h-1.2zM188.3 114.6h0.6v1.2h-0.6zM189.3 154.2h0.6v0.6h-0.6zM195.6 135.6h0.6v0.9h-0.6zM192.4 128.1h1.2v0.9h-1.2zM202.0 144.4h0.6v0.9h-0.6zM189.0 111.7h1.2v0.9h-1.2zM197.5 149.3h0.6v1.2h-0.6zM194.2 156.5h1.2v1.2h-1.2zM194.7 121.2h0.6v0.9h-0.6zM198.8 156.1h1.2v0.6h-1.2zM200.6 112.4h1.2v0.9h-1.2zM201.1 149.5h0.9v0.9h-0.9zM195.8 108.4h0.6v0.6h-0.6zM193.3 109.8h0.9v0.9h-0.9zM195.9 147.9h0.9v0.9h-0.9zM199.6 108.7h0.6v1.2h-0.6zM189.3 145.0h1.2v0.6h-1.2zM190.5 127.9h0.9v1.2h-0.9zM197.9 109.2h0.6v0.6h-0.6zM201.8 129.9h0.6v0.9h-0.6zM200.9 129.5h1.2v0.6h-1.2zM197.1 150.5h1.2v0.9h-1.2zM194.8 160.1h1.2v0.6h-1.2z" fill="#fff" opacity="0.85"/>
<path d="M336.5 108.8h1.0v0.8h-1.0zM332.3 108.5h0.6v1.0h-0.6zM311.2 92.5h1.3v0.6h-1.3zM325.7 84.3h1.0v1.0h-1.0zM342.8 108.7h0.8v1.0h-0.8zM339.1 126.2h0.8v1.0h-0.8zM329.2 102.8h0.8v0.8h-0.8zM326.3 73.6h0.8v0.6h-0.8zM298.7 100.7h1.3v1.0h-1.3zM311.1 127.7h1.0v1.0h-1.0zM319.6 79.4h0.8v0.8h-0.8zM347.9 104.6h0.6v1.0h-0.6zM300.8 116.7h1.0v0.8h-1.0zM297.8 121.5h1.0v1.0h-1.0zM305.4 106.4h0.8v0.8h-0.8zM328.2 120.7h1.3v0.6h-1.3zM315.8 119.0h0.8v1.0h-0.8zM338.4 122.8h1.3v0.6h-1.3zM300.1 96.7h0.6v0.8h-0.6zM323.8 79.1h1.3v0.8h-1.3zM311.5 79.9h0.8v1.0h-0.8zM293.4 119.0h0.8v1.3h-0.8zM351.4 108.0h1.3v1.0h-1.3zM316.3 109.4h1.3v1.0h-1.3zM321.1 131.7h1.3v1.3h-1.3zM297.5 78.9h1.0v1.3h-1.0zM316.9 73.5h0.6v1.0h-0.6zM336.4 126.0h1.3v1.0h-1.3zM338.1 90.3h0.6v0.8h-0.6zM298.0 98.8h1.3v0.6h-1.3zM320.4 78.3h0.8v1.0h-0.8zM332.0 128.4h0.6v1.0h-0.6zM345.5 97.3h0.8v0.8h-0.8zM331.6 97.3h0.6v0.6h-0.6zM296.3 119.5h0.6v1.3h-0.6zM290.0 86.6h1.0v0.6h-1.0zM310.8 75.8h1.3v1.3h-1.3zM299.0 113.5h0.8v0.6h-0.8zM309.6 99.3h1.0v1.0h-1.0zM310.8 80.6h1.3v0.8h-1.3zM303.0 123.5h0.6v0.8h-0.6zM310.2 123.6h1.3v0.6h-1.3zM301.0 124.8h0.8v0.8h-0.8zM302.3 124.8h0.6v0.6h-0.6zM309.6 121.1h1.0v1.3h-1.0zM335.6 80.1h1.3v1.3h-1.3zM295.1 85.4h1.0v0.6h-1.0zM335.5 83.8h0.8v0.8h-0.8zM322.1 89.7h1.0v1.0h-1.0zM341.4 103.5h0.6v0.8h-0.6zM352.5 125.7h0.8v0.8h-0.8zM307.7 110.4h0.6v1.3h-0.6zM352.9 98.4h0.6v0.6h-0.6zM290.4 107.2h1.0v1.3h-1.0zM341.4 77.2h1.0v0.8h-1.0zM305.7 88.7h0.6v0.8h-0.6zM340.6 81.0h0.6v1.3h-0.6zM348.7 107.1h0.6v1.3h-0.6zM293.9 75.8h1.0v1.0h-1.0zM332.1 119.0h1.0v0.8h-1.0zM328.0 118.3h0.6v1.3h-0.6zM305.1 98.4h1.0v0.8h-1.0zM306.6 104.6h1.3v1.0h-1.3zM292.3 107.8h0.6v1.3h-0.6zM345.9 82.8h0.8v0.6h-0.8zM328.9 120.4h1.3v1.0h-1.3zM344.8 73.9h0.6v0.8h-0.6zM326.4 104.6h0.8v0.8h-0.8zM293.5 97.5h1.0v1.0h-1.0zM339.0 101.9h0.8v1.3h-0.8zM306.3 81.6h1.3v0.6h-1.3zM310.2 100.0h0.8v0.6h-0.8zM298.2 117.3h0.8v0.8h-0.8zM337.7 103.3h0.6v0.6h-0.6zM305.4 125.4h0.8v0.6h-0.8zM315.1 89.9h1.3v0.6h-1.3zM352.2 112.8h0.8v1.0h-0.8zM306.2 105.1h0.8v1.3h-0.8zM319.5 127.9h1.0v1.0h-1.0zM311.6 130.9h0.8v0.6h-0.8zM300.3 107.1h0.6v1.0h-0.6zM326.3 126.7h0.8v1.3h-0.8zM345.0 128.1h0.8v1.3h-0.8zM314.2 75.0h1.3v1.0h-1.3zM305.8 119.6h0.8v1.3h-0.8zM303.0 84.9h1.3v1.0h-1.3zM320.2 101.4h0.8v1.3h-0.8zM303.1 95.0h0.6v0.6h-0.6zM334.2 93.8h1.0v0.6h-1.0zM323.2 116.5h1.3v0.8h-1.3zM307.2 93.7h0.8v1.0h-0.8zM298.8 86.5h0.6v0.6h-0.6zM353.9 122.3h1.3v0.6h-1.3zM344.7 94.9h1.0v0.6h-1.0zM309.3 108.5h1.3v0.6h-1.3zM302.0 102.8h0.8v0.6h-0.8zM303.3 96.6h1.3v0.8h-1.3zM323.1 104.9h1.0v1.3h-1.0zM332.6 80.8h0.8v1.0h-0.8zM324.2 99.0h0.8v1.3h-0.8zM323.1 93.3h0.6v1.0h-0.6zM313.7 108.7h0.8v0.6h-0.8zM344.3 116.8h1.3v0.6h-1.3zM341.8 130.5h1.0v0.6h-1.0zM348.8 85.0h1.0v0.6h-1.0zM351.1 124.1h0.8v1.0h-0.8zM295.8 97.7h1.3v1.3h-1.3zM293.8 95.0h1.0v1.0h-1.0zM321.8 88.8h0.8v1.3h-0.8zM302.9 118.1h1.0v0.8h-1.0zM323.3 116.6h1.3v0.8h-1.3zM320.6 87.4h1.0v0.6h-1.0zM347.8 79.2h0.6v1.3h-0.6zM307.4 94.6h1.0v1.3h-1.0zM336.0 125.2h0.6v0.6h-0.6zM292.3 91.4h1.0v1.0h-1.0zM306.8 112.1h0.8v1.3h-0.8zM314.6 92.5h1.0v0.6h-1.0zM326.9 128.5h0.6v0.6h-0.6zM329.7 96.7h1.3v0.6h-1.3zM307.7 121.8h1.3v1.3h-1.3zM351.8 95.1h0.8v1.0h-0.8zM309.8 93.6h0.6v0.8h-0.6zM328.7 88.2h1.0v0.8h-1.0zM305.0 72.1h1.3v0.6h-1.3zM305.3 101.6h0.6v1.0h-0.6zM306.9 78.2h0.6v1.0h-0.6zM341.6 84.5h1.3v0.8h-1.3zM351.7 121.5h0.8v1.0h-0.8zM329.8 101.4h1.0v1.0h-1.0zM316.5 94.0h1.3v0.8h-1.3zM331.4 93.7h0.8v0.8h-0.8zM346.2 131.4h0.6v1.0h-0.6zM297.2 99.1h1.3v0.6h-1.3zM300.4 124.0h1.3v0.6h-1.3zM312.1 95.8h1.3v1.0h-1.3zM335.8 87.1h1.0v0.8h-1.0zM311.4 117.6h0.8v1.3h-0.8zM331.0 79.5h1.0v0.8h-1.0zM298.0 94.6h1.0v0.8h-1.0zM331.7 130.4h1.3v0.8h-1.3zM307.2 88.3h1.0v1.3h-1.0zM314.7 112.8h0.8v0.6h-0.8zM300.1 131.8h0.6v0.8h-0.6zM308.3 115.9h0.6v1.3h-0.6zM311.1 73.6h1.3v0.8h-1.3zM313.9 90.6h1.0v0.8h-1.0zM315.1 109.1h0.8v1.3h-0.8zM333.2 85.0h1.0v0.8h-1.0zM318.3 122.0h1.0v1.3h-1.0zM317.7 81.1h0.6v1.0h-0.6zM326.2 80.6h1.3v1.0h-1.3zM310.6 76.9h0.8v1.0h-0.8zM325.3 105.5h0.8v0.6h-0.8zM290.5 117.6h0.6v0.6h-0.6zM301.7 101.0h0.8v1.3h-0.8zM321.0 96.9h1.3v0.6h-1.3zM303.8 109.0h1.0v1.0h-1.0zM302.1 89.4h0.8v1.3h-0.8zM326.6 128.4h0.6v0.8h-0.6zM344.9 128.7h0.6v0.6h-0.6zM307.3 73.4h1.0v0.6h-1.0zM322.9 72.6h0.8v0.6h-0.8zM351.4 72.7h1.0v0.8h-1.0zM340.7 116.1h1.3v1.0h-1.3zM341.4 121.7h0.6v1.3h-0.6zM315.7 114.3h1.0v0.6h-1.0zM290.6 80.4h1.0v1.3h-1.0zM336.4 102.4h1.0v1.0h-1.0zM330.1 99.0h1.0v1.0h-1.0zM294.3 111.2h0.6v1.0h-0.6zM311.4 116.5h0.8v0.6h-0.8zM337.6 104.8h0.8v0.8h-0.8zM312.2 81.3h1.0v1.0h-1.0zM301.7 73.3h1.3v0.6h-1.3zM315.8 91.3h0.8v0.6h-0.8zM346.4 91.3h0.6v1.0h-0.6zM317.5 129.8h0.8v1.3h-0.8zM316.1 114.4h0.8v1.0h-0.8zM294.5 95.4h1.0v0.8h-1.0zM339.8 103.5h0.6v0.8h-0.6zM336.7 111.7h0.6v0.8h-0.6zM329.5 92.7h1.3v1.3h-1.3zM322.3 106.1h0.6v0.6h-0.6zM343.6 113.4h1.3v1.3h-1.3zM332.6 97.2h1.3v0.8h-1.3zM314.0 104.5h0.6v0.6h-0.6zM323.8 99.1h1.0v0.6h-1.0zM328.1 127.9h0.8v1.3h-0.8zM311.0 87.4h1.0v0.8h-1.0zM337.2 131.4h1.3v0.6h-1.3zM345.5 79.6h1.3v0.6h-1.3zM305.0 122.4h0.8v0.6h-0.8zM341.1 102.7h1.0v0.6h-1.0zM301.8 74.3h1.0v1.0h-1.0zM323.1 92.9h0.8v0.6h-0.8zM345.4 83.8h1.0v0.8h-1.0zM294.7 105.3h1.3v0.8h-1.3zM294.6 101.8h0.6v0.6h-0.6zM341.0 81.1h1.0v0.8h-1.0zM296.4 74.2h1.0v0.8h-1.0zM343.4 79.0h0.8v1.3h-0.8zM292.0 112.9h1.3v1.3h-1.3zM294.6 131.3h0.8v1.0h-0.8zM346.1 115.7h0.8v1.3h-0.8zM314.2 121.0h1.0v1.0h-1.0zM332.1 84.5h0.8v0.8h-0.8zM339.0 82.3h1.3v0.6h-1.3zM298.3 79.0h1.0v1.0h-1.0zM309.7 72.5h0.6v0.8h-0.6zM337.1 93.6h1.0v1.3h-1.0zM302.8 76.3h1.0v1.3h-1.0zM314.0 108.8h1.0v1.3h-1.0zM298.6 79.4h0.6v1.0h-0.6zM322.9 97.1h1.3v0.6h-1.3zM308.2 124.4h1.0v0.6h-1.0zM333.3 99.3h1.3v1.3h-1.3zM302.7 96.8h0.8v1.3h-0.8zM330.9 94.0h1.0v1.0h-1.0zM327.4 111.5h1.0v1.0h-1.0z" fill="#2a0000" opacity="0.85"/>
<path d="M332.4 132.4h0.8v0.6h-0.8zM316.3 136.4h1.0v1.3h-1.0zM316.9 143.3h0.6v0.6h-0.6zM319.0 138.9h1.0v0.6h-1.0zM314.0 155.9h1.0v0.6h-1.0zM332.8 137.1h0.6v1.0h-0.6zM300.9 148.7h1.3v0.6h-1.3zM352.1 164.2h1.3v1.3h-1.3zM343.0 153.4h0.6v0.6h-0.6zM294.3 147.3h1.3v0.8h-1.3zM323.1 151.3h1.3v1.0h-1.3zM343.1 149.0h0.6v0.6h-0.6zM290.2 163.6h1.0v1.3h-1.0zM339.7 135.9h1.3v0.8h-1.3zM291.0 160.4h0.6v0.6h-0.6zM312.5 149.7h0.6v0.6h-0.6zM309.3 148.7h0.6v0.6h-0.6zM326.3 136.3h0.6v1.0h-0.6zM308.8 157.7h0.8v1.3h-0.8zM319.8 164.7h1.3v0.8h-1.3zM325.7 147.2h0.6v0.8h-0.6zM299.2 150.6h0.8v1.3h-0.8zM329.6 163.8h0.6v1.3h-0.6zM342.6 139.6h0.6v1.3h-0.6zM300.0 149.5h0.6v1.3h-0.6z" fill="#2a0000" opacity="0.8"/>
<path d="M203.9 179.2h0.6v1.3h-0.6zM236.9 173.9h1.0v0.6h-1.0zM263.0 182.1h1.3v0.8h-1.3zM262.6 193.3h0.8v0.6h-0.8zM234.6 179.2h1.0v0.8h-1.0zM231.7 182.3h1.3v1.3h-1.3zM230.7 182.3h1.3v0.6h-1.3zM197.4 192.1h0.6v0.8h-0.6zM249.0 185.1h1.3v0.8h-1.3zM264.9 189.1h0.6v1.0h-0.6zM230.8 194.8h1.3v0.6h-1.3zM232.3 186.2h0.6v0.6h-0.6zM266.3 180.6h0.8v1.0h-0.8zM296.0 188.7h1.0v0.8h-1.0zM257.8 186.1h1.0v0.8h-1.0zM245.7 184.4h1.0v0.6h-1.0zM284.4 177.1h1.0v1.3h-1.0zM261.9 181.0h0.6v1.0h-0.6zM253.8 174.3h1.3v0.8h-1.3zM281.8 179.9h1.0v0.8h-1.0zM280.5 190.9h1.0v0.6h-1.0zM300.0 183.8h1.3v0.6h-1.3zM251.6 194.3h0.6v0.8h-0.6zM254.6 172.1h1.3v1.3h-1.3zM228.2 187.0h0.6v0.8h-0.6zM276.4 182.6h0.8v1.3h-0.8zM273.7 188.3h0.6v1.3h-0.6zM226.6 189.6h0.6v0.6h-0.6zM295.3 180.5h0.6v0.6h-0.6zM234.9 188.6h0.6v0.8h-0.6zM202.5 179.8h0.8v0.6h-0.8zM208.7 178.6h1.3v0.6h-1.3zM288.8 194.3h0.8v1.3h-0.8zM245.3 188.5h1.3v1.3h-1.3zM203.4 189.8h0.8v1.0h-0.8zM213.8 180.3h0.8v1.0h-0.8zM232.7 191.3h1.3v1.3h-1.3zM254.0 192.2h1.0v0.8h-1.0zM243.9 195.5h1.0v0.6h-1.0zM267.3 177.6h1.0v1.0h-1.0zM270.9 185.8h1.0v0.6h-1.0zM278.7 178.1h0.8v0.8h-0.8zM238.7 186.8h0.8v1.3h-0.8zM290.2 182.9h1.3v0.6h-1.3zM217.0 190.1h0.6v1.0h-0.6zM246.1 175.6h1.0v0.8h-1.0zM251.6 180.0h0.8v1.3h-0.8zM294.7 190.4h1.0v0.6h-1.0zM218.7 175.7h0.8v1.0h-0.8zM205.0 190.4h0.8v1.0h-0.8zM266.4 180.7h1.0v1.0h-1.0zM203.9 180.6h0.8v1.0h-0.8zM264.1 178.9h0.8v1.0h-0.8zM244.4 178.5h1.0v1.0h-1.0zM293.9 175.7h1.3v0.8h-1.3zM280.8 185.1h0.8v0.6h-0.8zM250.7 189.6h1.0v1.0h-1.0zM197.9 194.5h1.0v0.8h-1.0zM243.9 188.5h1.0v0.8h-1.0zM293.9 184.1h1.0v0.8h-1.0zM200.1 185.2h0.6v1.0h-0.6zM289.4 174.4h0.6v0.8h-0.6zM298.8 179.4h0.8v0.6h-0.8zM294.5 188.0h0.8v0.6h-0.8zM236.6 175.4h0.6v1.3h-0.6zM248.9 176.4h1.0v1.3h-1.0zM291.9 193.1h0.6v1.3h-0.6zM207.1 176.6h1.3v0.6h-1.3zM252.2 195.3h0.6v0.8h-0.6zM289.1 178.1h0.8v1.0h-0.8zM293.4 195.4h0.8v1.3h-0.8zM293.0 172.5h1.3v1.0h-1.3zM292.8 174.1h0.8v0.6h-0.8zM203.8 179.2h1.0v0.6h-1.0zM236.7 175.6h0.8v0.6h-0.8zM192.1 173.6h0.8v1.3h-0.8zM282.0 181.8h1.0v0.8h-1.0zM229.4 172.4h0.8v1.0h-0.8zM197.2 180.9h1.0v1.0h-1.0zM241.1 177.6h1.3v0.8h-1.3zM213.7 177.1h1.3v1.3h-1.3zM215.9 194.1h0.8v0.8h-0.8zM265.2 186.6h1.0v0.6h-1.0zM211.9 177.6h1.0v1.0h-1.0zM271.9 176.9h0.6v0.8h-0.6zM250.3 173.9h0.8v1.3h-0.8zM215.5 181.9h0.8v1.0h-0.8zM264.3 173.7h0.6v1.3h-0.6zM300.0 182.1h0.8v1.0h-0.8zM299.2 177.0h1.0v0.6h-1.0z" fill="#2a0000" opacity="0.8"/>
<path d="M268.6 95.5h0.6v0.6h-0.6zM269.9 84.5h0.6v1.3h-0.6zM294.9 78.6h0.8v0.8h-0.8zM292.7 99.0h1.0v1.0h-1.0zM248.3 78.4h1.0v0.6h-1.0zM251.6 78.4h0.8v1.3h-0.8zM262.0 93.2h1.0v0.8h-1.0zM296.3 76.8h0.8v1.0h-0.8zM280.6 78.1h1.0v0.8h-1.0zM274.9 81.8h1.3v1.0h-1.3zM296.8 77.0h0.8v0.6h-0.8zM244.6 82.7h0.8v0.8h-0.8zM297.9 91.0h0.6v1.0h-0.6zM269.0 97.3h1.3v1.0h-1.3zM276.2 96.2h1.3v0.6h-1.3zM251.4 98.6h0.6v1.3h-0.6zM285.8 85.0h0.6v1.0h-0.6zM249.8 79.3h0.8v0.6h-0.8zM241.5 85.6h1.3v0.6h-1.3zM267.9 79.6h0.6v0.8h-0.6zM258.3 76.0h1.0v1.0h-1.0zM281.3 81.3h1.0v0.8h-1.0zM261.4 97.1h1.3v1.3h-1.3zM272.4 86.5h1.0v1.3h-1.0zM254.0 98.4h0.8v1.3h-0.8zM270.5 99.6h1.0v0.8h-1.0zM296.0 82.8h1.3v0.8h-1.3zM282.1 83.5h0.6v0.6h-0.6zM260.8 89.0h1.3v1.3h-1.3zM281.1 91.6h1.3v1.0h-1.3zM269.9 96.2h1.3v0.6h-1.3zM245.4 87.4h1.3v0.6h-1.3zM278.5 99.3h1.0v1.3h-1.0zM243.0 82.0h0.6v0.8h-0.6zM275.0 85.0h0.6v1.0h-0.6zM251.7 90.8h0.6v1.3h-0.6zM261.2 76.5h0.6v1.3h-0.6zM291.6 78.8h1.0v1.0h-1.0zM295.6 91.2h1.3v1.0h-1.3zM298.7 97.9h0.8v1.0h-0.8z" fill="#2a0000" opacity="0.8"/>
<rect x="188.8" y="65.2" width="4.6" height="4.4" fill="#66a040"/><circle cx="191.10000000000002" cy="67.4" r="1.2" fill="#e0e0e0" stroke="#333" stroke-width="0.4"/>
<rect x="350.2" y="65.4" width="4.6" height="4.4" fill="#66a040"/><circle cx="352.5" cy="67.60000000000001" r="1.2" fill="#e0e0e0" stroke="#333" stroke-width="0.4"/>
<rect x="188.6" y="206.8" width="4.6" height="4.4" fill="#66a040"/><circle cx="190.9" cy="209.0" r="1.2" fill="#e0e0e0" stroke="#333" stroke-width="0.4"/>
<rect x="350.6" y="203.6" width="4.6" height="4.4" fill="#66a040"/><circle cx="352.90000000000003" cy="205.79999999999998" r="1.2" fill="#e0e0e0" stroke="#333" stroke-width="0.4"/>
<path d="M204.6 77.6H217.6L226.4 86.4V97.6 M204.6 80.8H216.4L223.2 87.6V97.6 M207 99.6H229L237 105.4" fill="none" stroke="#ffb8b8" stroke-width="0.75"/>
<rect x="221.2" y="70" width="2.2" height="2.2" fill="#9cc8e0"/><rect x="221.2" y="93" width="2.2" height="2.2" fill="#9cc8e0"/>
<rect x="193.9" y="67" width="3.9" height="30.6" fill="#0d0d0d"/><rect x="194.5" y="68" width="0.7" height="28.6" fill="#3a9ad0"/><rect x="196.6" y="68" width="0.7" height="28.6" fill="#3a9ad0"/><path d="M195.9 69v27" stroke="#d8eef8" stroke-width="0.6" stroke-dasharray="1.2 1.4"/>
<rect x="200.8" y="68" width="3.6" height="28.6" fill="#0d0d0d"/><rect x="201.3" y="70.4" width="0.7" height="25.4" fill="#3a9ad0"/><rect x="203.2" y="70.4" width="0.7" height="25.4" fill="#3a9ad0"/><path d="M202.6 71v24" stroke="#c8e4f4" stroke-width="0.5" stroke-dasharray="1 1.6"/>
<rect x="194.4" y="66.6" width="3" height="2" fill="#2a90c8"/><rect x="194.4" y="96" width="3" height="2" fill="#2a90c8"/>
<path d="M187.4 101.4H226.2 M187.4 169.2H226.2" stroke="#111" stroke-width="0.6"/>
<path d="M188 131.8H226" stroke="#a00000" stroke-width="0.4"/>
<rect x="204.1" y="102" width="0.8" height="66.6" fill="#3aa0d0"/><rect x="204.8" y="102" width="2.8" height="66.6" fill="#050505"/>
<rect x="211.9" y="102" width="4.7" height="66.6" fill="#0d2030"/><rect x="211.9" y="102" width="0.8" height="66.6" fill="#3aa8d8"/><rect x="215.6" y="102" width="1" height="66.6" fill="#3aa8d8"/><path d="M214.1 103v65" stroke="#c8e4f4" stroke-width="0.5" stroke-dasharray="1 2.2"/><rect x="216.6" y="102" width="2.2" height="66.6" fill="#050505"/>
<rect x="223" y="102" width="2.8" height="66.6" fill="#0a1a28"/><rect x="223" y="102" width="0.7" height="66.6" fill="#3aa8d8"/><rect x="225" y="102" width="0.8" height="66.6" fill="#3aa8d8"/>
<rect x="210.6" y="97" width="4.6" height="3.6" fill="#2aa0d8"/><rect x="196" y="101.6" width="4.4" height="3.2" fill="#2aa0d8"/>
<rect x="195.4" y="166" width="5.6" height="3" fill="#2aa0d8"/><rect x="207" y="170" width="4" height="3" fill="#2aa0d8"/>
<rect x="189" y="98" width="3.6" height="1.2" fill="#c8c040"/>
<circle cx="230.6" cy="82.2" r="3.6" fill="#1a1a1a"/><circle cx="230.6" cy="82.2" r="2.5" fill="#c80000" stroke="#5a7a2a" stroke-width="0.6"/><path d="M229.6 82.2h2" stroke="#222" stroke-width="0.6"/>
<circle cx="238.8" cy="82.2" r="3.6" fill="#1a1a1a"/><circle cx="238.8" cy="82.2" r="2.5" fill="#c80000" stroke="#5a7a2a" stroke-width="0.6"/><path d="M237.8 82.2h2" stroke="#222" stroke-width="0.6"/>
<circle cx="230.6" cy="91" r="3.6" fill="#1a1a1a"/><circle cx="230.6" cy="91" r="2.5" fill="#c80000" stroke="#5a7a2a" stroke-width="0.6"/><path d="M229.6 91h2" stroke="#222" stroke-width="0.6"/>
<rect x="243.6" y="77.6" width="8.6" height="3.6" fill="#1a5a80"/><rect x="244.4" y="84.6" width="6" height="4.4" fill="#2a90c8"/><rect x="242.4" y="91" width="12" height="1.2" fill="#1a1a1a"/><rect x="246" y="89" width="4" height="5" fill="#1a6a98"/>
<circle cx="240" cy="73.4" r="1.6" fill="#222"/><rect x="237" y="76" width="5" height="1.4" fill="#4a6a3a"/>
<rect x="246.2" y="66.8" width="36.5" height="6.2" fill="#0c0c0c"/><rect x="285.2" y="67" width="9.3" height="6" fill="#0c0c0c"/>
<path d="M247 68.6H282M247 71.2H282M286 68.6H294M286 71.2H294" stroke="#6a7a4a" stroke-width="0.6" stroke-dasharray="0.8 0.9"/>
<clipPath id="fanclip"><path d="M251 73.4H282L288.6 96L287 103.6H277.6z"/></clipPath>
<g clip-path="url(#fanclip)"><path d="M230.00 73L261.00 104M231.25 73L262.25 104M232.50 73L263.50 104M233.75 73L264.75 104M235.00 73L266.00 104M236.25 73L267.25 104M237.50 73L268.50 104M238.75 73L269.75 104M240.00 73L271.00 104M241.25 73L272.25 104M242.50 73L273.50 104M243.75 73L274.75 104M245.00 73L276.00 104M246.25 73L277.25 104M247.50 73L278.50 104M248.75 73L279.75 104M250.00 73L281.00 104M251.25 73L282.25 104M252.50 73L283.50 104M253.75 73L284.75 104M255.00 73L286.00 104M256.25 73L287.25 104M257.50 73L288.50 104M258.75 73L289.75 104M260.00 73L291.00 104M261.25 73L292.25 104M262.50 73L293.50 104M263.75 73L294.75 104M265.00 73L296.00 104M266.25 73L297.25 104M267.50 73L298.50 104M268.75 73L299.75 104M270.00 73L301.00 104M271.25 73L302.25 104M272.50 73L303.50 104M273.75 73L304.75 104M275.00 73L306.00 104M276.25 73L307.25 104M277.50 73L308.50 104M278.75 73L309.75 104" stroke="#ffe2e2" stroke-width="0.6"/></g>
<path d="M258.6 74.6h3.2v7.8l-3.2-3.4zM265.6 74.6h3.6v12.2l-3.6-3.8zM271.6 74.6h4v15.2l-4-4.2zM278.4 74.6h2.6v14.4l-2.6-3z" fill="#fff"/>
<path d="M252 73.6v4M255 73.6v5M283.4 74v6" stroke="#ffd8d8" stroke-width="0.8"/>
<path d="M222.0 98.0L248.0 120M223.3 98.3L249.3 120M224.6 98.6L250.6 120M225.9 98.9L251.9 120M227.2 99.2L253.2 120M228.5 99.5L254.5 120" fill="none" stroke="#ffa6a6" stroke-width="0.45"/>
<circle cx="266.1" cy="137.2" r="33.6" fill="none" stroke="#2a0000" stroke-width="0.8"/>
<circle cx="266.1" cy="137.2" r="31.4" fill="none" stroke="#3a0000" stroke-width="0.6"/>
<circle cx="238.8" cy="111.9" r="2.2" fill="#1a1a1a"/><circle cx="238.8" cy="111.9" r="1" fill="#888"/>
<circle cx="293.4" cy="111.9" r="2.2" fill="#1a1a1a"/><circle cx="293.4" cy="111.9" r="1" fill="#888"/>
<circle cx="238.8" cy="165.5" r="2.2" fill="#1a1a1a"/><circle cx="238.8" cy="165.5" r="1" fill="#888"/>
<circle cx="293.4" cy="165.5" r="2.2" fill="#1a1a1a"/><circle cx="293.4" cy="165.5" r="1" fill="#888"/>
<rect x="247.6" y="119.7" width="37.8" height="37.8" fill="#aee0f4"/>
<path d="M247.8 120.60H285.2M247.8 122.60H285.2M247.8 124.60H285.2M247.8 126.60H285.2M247.8 128.60H285.2M247.8 130.60H285.2M247.8 132.60H285.2M247.8 134.60H285.2M247.8 136.60H285.2M247.8 138.60H285.2M247.8 140.60H285.2M247.8 142.60H285.2M247.8 144.60H285.2M247.8 146.60H285.2M247.8 148.60H285.2M247.8 150.60H285.2M247.8 152.60H285.2M247.8 154.60H285.2M247.8 156.60H285.2" stroke="#e8f8ff" stroke-width="0.6" stroke-dasharray="0.8 1.2" fill="none"/>
<path d="M256.21 124.84L254.94 108.56M254.37 122.43L253.35 109.40M252.53 120.01L251.77 110.24M250.69 117.60L250.18 111.09M248.85 115.19L248.60 111.93M269.60 121.76L281.53 110.62M270.34 118.82L279.89 109.90M271.08 115.87L278.24 109.19M271.82 112.93L276.59 108.47M272.56 109.99L274.95 107.76M280.35 130.31L296.51 132.69M283.12 129.05L296.04 130.96M285.88 127.80L295.57 129.23M288.64 126.54L295.10 127.49M291.40 125.29L294.63 125.76M280.38 144.05L288.58 158.16M283.08 145.42L289.65 156.72M285.78 146.80L290.71 155.27M288.49 148.18L291.77 153.82M291.19 149.55L292.83 152.38M269.65 152.63L263.73 167.85M270.26 155.60L265.52 167.78M270.87 158.57L267.31 167.70M271.48 161.55L269.11 167.63M272.08 164.52L270.90 167.56M256.25 149.59L240.66 154.45M254.30 151.92L241.83 155.81M252.36 154.25L243.01 157.17M250.42 156.58L244.18 158.53M248.47 158.91L245.35 159.88M250.27 137.23L236.75 128.07M247.23 137.16L236.42 129.83M244.20 137.09L236.09 131.59M241.17 137.02L235.76 133.36M238.13 136.95L235.43 135.12M258.04 127.25L247.01 112.77M258.04 127.25L256.52 107.72M268.86 124.70L273.30 107.05M268.86 124.70L283.18 111.33M277.59 131.56L294.16 124.03M277.59 131.56L296.98 134.42M277.67 142.67L293.89 150.93M277.67 142.67L287.52 159.61M269.04 149.66L272.69 167.49M269.04 149.66L261.94 167.92M258.19 147.27L246.53 161.24M258.19 147.27L239.49 153.10M253.30 137.29L235.10 136.89M253.30 137.29L237.08 126.30" stroke="#3a0000" stroke-width="0.4" fill="none"/>
<clipPath id="chipclip"><rect x="247.6" y="119.7" width="37.8" height="37.8"/></clipPath>
<g clip-path="url(#chipclip)"><path d="M256.21 124.84L254.94 108.56M254.37 122.43L253.35 109.40M252.53 120.01L251.77 110.24M250.69 117.60L250.18 111.09M248.85 115.19L248.60 111.93M269.60 121.76L281.53 110.62M270.34 118.82L279.89 109.90M271.08 115.87L278.24 109.19M271.82 112.93L276.59 108.47M272.56 109.99L274.95 107.76M280.35 130.31L296.51 132.69M283.12 129.05L296.04 130.96M285.88 127.80L295.57 129.23M288.64 126.54L295.10 127.49M291.40 125.29L294.63 125.76M280.38 144.05L288.58 158.16M283.08 145.42L289.65 156.72M285.78 146.80L290.71 155.27M288.49 148.18L291.77 153.82M291.19 149.55L292.83 152.38M269.65 152.63L263.73 167.85M270.26 155.60L265.52 167.78M270.87 158.57L267.31 167.70M271.48 161.55L269.11 167.63M272.08 164.52L270.90 167.56M256.25 149.59L240.66 154.45M254.30 151.92L241.83 155.81M252.36 154.25L243.01 157.17M250.42 156.58L244.18 158.53M248.47 158.91L245.35 159.88M250.27 137.23L236.75 128.07M247.23 137.16L236.42 129.83M244.20 137.09L236.09 131.59M241.17 137.02L235.76 133.36M238.13 136.95L235.43 135.12M258.04 127.25L247.01 112.77M258.04 127.25L256.52 107.72M268.86 124.70L273.30 107.05M268.86 124.70L283.18 111.33M277.59 131.56L294.16 124.03M277.59 131.56L296.98 134.42M277.67 142.67L293.89 150.93M277.67 142.67L287.52 159.61M269.04 149.66L272.69 167.49M269.04 149.66L261.94 167.92M258.19 147.27L246.53 161.24M258.19 147.27L239.49 153.10M253.30 137.29L235.10 136.89M253.30 137.29L237.08 126.30" stroke="#182838" stroke-width="0.55" fill="none"/></g>
<circle cx="266.1" cy="137.2" r="11.8" fill="none" stroke="#1a2a3a" stroke-width="0.7"/>
<path d="M252 127.8H277M251.6 148.4H277.4" stroke="#101820" stroke-width="0.9"/>
<path d="M272.4 142.8h0.6v0.6h-0.6zM272.5 134.9h0.6v0.6h-0.6zM274.5 130.4h1.4v1.4h-1.4zM263.5 142.7h1.4v1.4h-1.4zM274.3 144.9h1.4v0.6h-1.4zM275.6 132.6h1v1h-1zM273.6 135.0h0.6v1.4h-0.6zM270.2 142.1h1.4v1.4h-1.4zM269.3 142.0h1.4v0.6h-1.4zM265.3 136.5h1v0.6h-1zM267.8 145.1h1.4v1h-1.4zM261.3 141.4h0.6v0.6h-0.6zM273.8 138.0h0.6v0.6h-0.6zM269.4 142.4h1.4v0.6h-1.4zM266.8 135.1h1v1.4h-1zM260.6 140.4h1.4v0.6h-1.4zM263.3 144.8h0.6v1h-0.6zM267.1 139.3h1v1h-1zM271.7 135.3h1v0.6h-1zM266.9 137.8h0.6v0.6h-0.6zM273.4 138.6h1v1.4h-1zM267.0 134.6h1.4v1h-1.4zM261.6 135.2h0.6v1h-0.6zM258.0 135.7h1.4v1.4h-1.4zM267.1 133.4h0.6v1h-0.6zM274.4 131.3h1v1h-1zM266.0 136.7h1.4v1.4h-1.4zM272.4 144.8h1.4v1h-1.4zM268.1 136.7h0.6v1.4h-0.6zM258.7 132.9h0.6v1.4h-0.6zM259.9 138.8h1v1.4h-1zM268.1 145.0h1v1.4h-1zM257.8 130.9h0.6v1h-0.6zM275.5 145.2h0.6v1h-0.6zM273.9 130.9h0.6v0.6h-0.6zM262.1 141.1h1v0.6h-1zM275.9 138.0h1.4v0.6h-1.4zM264.7 140.4h1.4v1.4h-1.4zM264.8 131.4h1.4v0.6h-1.4zM261.7 139.1h1v0.6h-1zM264.3 141.9h1.4v1h-1.4zM268.8 133.3h0.6v1.4h-0.6zM266.2 139.4h1v1.4h-1zM259.3 134.9h0.6v1.4h-0.6zM266.7 136.6h1v0.6h-1zM261.9 142.7h1.4v1h-1.4zM265.5 135.9h1v0.6h-1zM265.6 135.0h1.4v0.6h-1.4zM264.8 134.9h0.6v1h-0.6zM271.0 140.0h1.4v1h-1.4z" fill="#1a2430" opacity="0.85"/>
<path d="M264 136.4h7.6v3.6h-3v4.6h-3.4v-3.6h-1.2z" fill="#101418"/>
<path d="M256 157l-4 8 10 10 8 8M262 157l-6 9 9 9M270 158l-8 9 8 8M276 158l6 8-8 10M282 160l4 6-10 12M250 168l12-11M284 166l-10 10" fill="none" stroke="#ffdada" stroke-width="0.9"/>
<path d="M262 168l6 4 6-4" fill="none" stroke="#fff" stroke-width="1.4"/>
<rect x="295.2" y="141.2" width="12.6" height="2.8" fill="#8ccbe6" stroke="#e8f4ff" stroke-width="0.5"/>
<rect x="295.2" y="145" width="12.6" height="2.8" fill="#8ccbe6" stroke="#e8f4ff" stroke-width="0.5"/>
<rect x="295.2" y="152.8" width="12.6" height="2.8" fill="#8ccbe6" stroke="#e8f4ff" stroke-width="0.5"/>
<rect x="295.2" y="156.6" width="12.6" height="2.8" fill="#8ccbe6" stroke="#e8f4ff" stroke-width="0.5"/>
<rect x="315.7" y="66.4" width="14.8" height="15.4" fill="#a6c4e6"/>
<path d="M325.2 76.5h1.4v1h-1.4zM328.4 68.0h0.7v1h-0.7zM319.2 75.5h1.4v1.4h-1.4zM330.0 73.4h0.7v1.4h-0.7zM320.2 75.4h0.7v1.4h-0.7zM324.2 77.2h1.4v1.4h-1.4zM321.5 78.8h1v1h-1zM319.6 75.6h0.7v1h-0.7zM320.2 80.4h1.4v1h-1.4zM316.8 75.2h0.7v1.4h-0.7zM321.5 75.3h1.4v1.4h-1.4zM326.7 77.5h1.4v1h-1.4zM319.5 76.9h1.4v1h-1.4zM323.6 80.8h0.7v1.4h-0.7zM320.5 77.2h0.7v1h-0.7zM326.6 71.8h1v1h-1zM318.3 75.8h1v1.4h-1zM322.8 79.7h1v1.4h-1zM318.0 75.5h1v1h-1zM323.4 80.9h1.4v0.7h-1.4zM329.3 71.9h0.7v0.7h-0.7zM316.1 74.6h0.7v1.4h-0.7zM321.1 70.0h1.4v1h-1.4zM318.1 75.1h1.4v0.7h-1.4zM323.6 72.6h1v0.7h-1zM327.0 75.8h1.4v0.7h-1.4zM318.9 67.4h0.7v1.4h-0.7zM327.1 77.3h1v0.7h-1zM322.8 76.7h0.7v1.4h-0.7zM327.5 79.0h0.7v1.4h-0.7z" fill="#e0d0f0" opacity="0.9"/>
<path d="M320 70l6 8M326 70l-6 8" stroke="#5a7aa0" stroke-width="0.5"/>
<rect x="320" y="128.2" width="15.6" height="15" fill="#a6c4e6"/>
<path d="M330.6 138.8h1v0.7h-1zM332.7 138.8h0.7v1h-0.7zM333.8 140.0h1v1.4h-1zM327.6 134.0h1.4v0.7h-1.4zM329.0 133.5h1.4v1h-1.4zM331.8 141.4h0.7v0.7h-0.7zM333.7 138.5h0.7v1h-0.7zM325.3 138.9h0.7v1h-0.7zM333.1 132.2h1v0.7h-1zM323.4 139.1h0.7v1.4h-0.7zM331.2 139.7h1.4v1.4h-1.4zM334.1 129.3h1v0.7h-1zM328.9 139.7h1v1.4h-1zM328.0 134.4h0.7v1h-0.7zM320.3 138.8h0.7v1.4h-0.7zM324.1 138.3h1.4v1.4h-1.4zM324.8 135.5h1v0.7h-1zM328.4 134.0h1v0.7h-1zM323.7 133.1h1v0.7h-1zM320.2 133.3h1.4v0.7h-1.4zM324.0 130.6h0.7v1h-0.7zM330.2 131.7h1.4v1.4h-1.4zM332.0 135.2h1.4v1.4h-1.4zM323.7 140.4h1v1.4h-1zM324.0 135.2h1.4v1.4h-1.4zM335.0 140.2h0.7v1h-0.7zM320.3 133.2h0.7v1.4h-0.7zM331.9 137.7h1v1.4h-1zM322.9 141.2h1.4v1.4h-1.4zM326.9 134.2h1v0.7h-1z" fill="#e8e0f4" opacity="0.9"/>
<path d="M323 131l9 9M332 131l-9 9" stroke="#5a7aa0" stroke-width="0.5"/>
<rect x="301" y="87.8" width="10" height="10.4" fill="#f6faff"/><rect x="301" y="95" width="10" height="3.2" fill="#3aa0d8"/><rect x="303.4" y="89" width="2.8" height="4.4" fill="#1a1a1a"/><rect x="307" y="89" width="2.8" height="4.4" fill="#1a1a1a"/>
<rect x="325" y="91.8" width="9.6" height="9.8" fill="#f6faff"/><rect x="325" y="98.6" width="9.6" height="3" fill="#3aa0d8"/><rect x="329" y="93" width="3" height="4.4" fill="#1a1a1a"/>
<rect x="292.6" y="84.2" width="5.6" height="6" fill="#1a5a90"/><rect x="292.6" y="91" width="5.6" height="8.6" fill="#2a90c8"/><path d="M293.4 93h4M293.4 96h4" stroke="#0a0a0a" stroke-width="0.8"/>
<rect x="317" y="87" width="6" height="7" fill="#2a7ab8"/><rect x="338" y="120" width="5" height="12" fill="#1a4a78"/>
<rect x="344.6" y="133.6" width="8.8" height="7.4" fill="#f4f8ff"/><rect x="346" y="135" width="2.4" height="4.6" fill="#333"/><rect x="349.6" y="135" width="2.4" height="4.6" fill="#333"/><rect x="343" y="133.6" width="1.6" height="7.4" fill="#2a90c8"/>
<path d="M318.6 117.4h3M327 117.4h3M332.4 117.4h3.4" stroke="#fff" stroke-width="1.2"/>
<rect x="289.8" y="75.9" width="8" height="3.4" fill="#150000" opacity="0.85"/>
<rect x="299.8" y="76" width="4" height="2.2" fill="#150000" opacity="0.85"/>
<rect x="305" y="77" width="6.6" height="3" fill="#150000" opacity="0.85"/>
<rect x="307" y="95.7" width="3" height="9" fill="#150000" opacity="0.85"/>
<rect x="311.6" y="97" width="3" height="7" fill="#150000" opacity="0.85"/>
<rect x="309.7" y="108" width="5" height="3" fill="#150000" opacity="0.85"/>
<rect x="315" y="110" width="6" height="2.6" fill="#150000" opacity="0.85"/>
<rect x="312" y="114" width="8" height="2.4" fill="#150000" opacity="0.85"/>
<rect x="329.5" y="70" width="2.4" height="8" fill="#150000" opacity="0.85"/>
<rect x="333" y="78" width="2.6" height="7.6" fill="#150000" opacity="0.85"/>
<rect x="335.5" y="118" width="6" height="2.6" fill="#150000" opacity="0.85"/>
<rect x="336" y="104" width="4" height="8" fill="#150000" opacity="0.85"/>
<rect x="318" y="104" width="6" height="3" fill="#150000" opacity="0.85"/>
<rect x="322" y="84" width="2" height="6" fill="#150000" opacity="0.85"/>
<rect x="296" y="100" width="6" height="2.4" fill="#150000" opacity="0.85"/>
<rect x="300" y="104" width="3" height="6" fill="#150000" opacity="0.85"/>
<rect x="316" y="122" width="3" height="4" fill="#150000" opacity="0.85"/>
<rect x="338" y="88" width="2.4" height="6" fill="#150000" opacity="0.85"/>
<rect x="332" y="110" width="2.4" height="5" fill="#150000" opacity="0.85"/>
<rect x="286" y="110" width="5" height="2" fill="#150000" opacity="0.85"/>
<rect x="303" y="114" width="4" height="4" fill="#150000" opacity="0.85"/>
<rect x="309" y="124" width="6" height="2.4" fill="#150000" opacity="0.85"/>
<rect x="323" y="112" width="2" height="4" fill="#150000" opacity="0.85"/>
<rect x="301" y="80.4" width="3.4" height="2.4" fill="#2a90c8"/>
<rect x="313" y="101" width="2.6" height="2.6" fill="#2a90c8"/>
<rect x="316.6" y="112" width="2.4" height="2" fill="#2a90c8"/>
<rect x="331" y="86" width="2" height="2.6" fill="#2a90c8"/>
<rect x="336.6" y="112" width="2.4" height="2.2" fill="#2a90c8"/>
<rect x="310" y="118" width="3" height="2" fill="#2a90c8"/>
<circle cx="347.5" cy="87.6" r="4.8" fill="none" stroke="#4a0000" stroke-width="0.6"/>
<rect x="342.2" y="86.39999999999999" width="2.6" height="2.4" fill="#2a90c8"/><rect x="350.6" y="86.39999999999999" width="2.6" height="2.4" fill="#2a90c8"/>
<circle cx="347.5" cy="98.1" r="4.8" fill="none" stroke="#4a0000" stroke-width="0.6"/>
<rect x="342.2" y="96.89999999999999" width="2.6" height="2.4" fill="#2a90c8"/><rect x="350.6" y="96.89999999999999" width="2.6" height="2.4" fill="#2a90c8"/>
<circle cx="347.5" cy="108" r="4.8" fill="none" stroke="#4a0000" stroke-width="0.6"/>
<rect x="342.2" y="106.8" width="2.6" height="2.4" fill="#2a90c8"/><rect x="350.6" y="106.8" width="2.6" height="2.4" fill="#2a90c8"/>
<circle cx="347.5" cy="118.5" r="4.8" fill="none" stroke="#4a0000" stroke-width="0.6"/>
<rect x="342.2" y="117.3" width="2.6" height="2.4" fill="#2a90c8"/><rect x="350.6" y="117.3" width="2.6" height="2.4" fill="#2a90c8"/>
<rect x="339.8" y="62.6" width="9.4" height="12.6" fill="#fd0000" stroke="#2a2a2a" stroke-width="0.5"/><rect x="339.8" y="61.6" width="9.4" height="2.4" fill="#fff" stroke="#666" stroke-width="0.4"/><rect x="342" y="67.4" width="4.6" height="1.8" fill="#5a9a30"/><rect x="342" y="72.6" width="4.6" height="1.8" fill="#5a9a30"/>
<circle cx="351.4" cy="77" r="2" fill="#111"/>
<rect x="340" y="152" width="11" height="11" fill="#2a6aa8"/><path d="M341.2 153v9M343.4 153v9M345.6 153v9M347.8 153v9M350 153v9" stroke="#b8d4f0" stroke-width="0.6"/>
<rect x="323" y="154" width="5" height="2" fill="#3a5a2a"/>
<rect x="312.7" y="168.7" width="15.4" height="39.6" fill="none" stroke="#2a0000" stroke-width="0.7"/>
<rect x="314.3" y="169.2" width="12.2" height="2.6" fill="#2a8ac0"/>
<ellipse cx="320.4" cy="177" rx="5" ry="1.5" fill="#1a1a1a"/>
<path d="M313.3 182.6v2M313.3 192.6v2M313.3 203v2M327.5 182.6v2M327.5 192.6v2M327.5 203v2" stroke="#a0c040" stroke-width="1.2"/>
<path d="M318.09999999999997 184.6h1.6M322.09999999999997 184.6h1.6M319.7 193h1.4M319.7 198h1.4" stroke="#a0c040" stroke-width="1.2"/>
<circle cx="320.4" cy="205" r="1.4" fill="none" stroke="#3a0000" stroke-width="0.6"/>
<rect x="331.6" y="168.7" width="15.4" height="39.6" fill="none" stroke="#2a0000" stroke-width="0.7"/>
<rect x="333.20000000000005" y="169.2" width="12.2" height="2.6" fill="#2a8ac0"/>
<ellipse cx="339.3" cy="177" rx="5" ry="1.5" fill="#1a1a1a"/>
<path d="M332.20000000000005 182.6v2M332.20000000000005 192.6v2M332.20000000000005 203v2M346.40000000000003 182.6v2M346.40000000000003 192.6v2M346.40000000000003 203v2" stroke="#a0c040" stroke-width="1.2"/>
<path d="M337.0 184.6h1.6M341.0 184.6h1.6M338.6 193h1.4M338.6 198h1.4" stroke="#a0c040" stroke-width="1.2"/>
<circle cx="339.3" cy="205" r="1.4" fill="none" stroke="#3a0000" stroke-width="0.6"/>
<path d="M196 177h6v3h-6zM204 176h5v2h-5zM197 186h4v4h-4zM209 179h3v5h-3zM201 188h8v1.6h-8z" fill="#111"/>
<rect x="197.6" y="179.6" width="4.6" height="3.6" fill="#2a9ad4"/><rect x="205.4" y="183.2" width="4.6" height="4.6" fill="#2a9ad4" stroke="#111" stroke-width="0.5"/>
<rect x="224.0" y="180.39999999999998" width="11.4" height="10.4" fill="none" stroke="#111" stroke-width="0.8"/><rect x="226.0" y="182.2" width="7.4" height="7" fill="#2a9ad4"/><rect x="227.4" y="183.79999999999998" width="4.6" height="3.6" fill="#5ac0ec"/><rect x="235.8" y="180.2" width="2.6" height="3.6" fill="#111"/><rect x="222.4" y="185.2" width="1.6" height="3" fill="#111"/>
<rect x="247.4" y="180.39999999999998" width="11.4" height="10.4" fill="none" stroke="#111" stroke-width="0.8"/><rect x="249.4" y="182.2" width="7.4" height="7" fill="#2a9ad4"/><rect x="250.8" y="183.79999999999998" width="4.6" height="3.6" fill="#5ac0ec"/><rect x="259.2" y="180.2" width="2.6" height="3.6" fill="#111"/><rect x="245.8" y="185.2" width="1.6" height="3" fill="#111"/>
<rect x="269.2" y="184.6" width="10" height="8.6" rx="1" fill="#2a90c8" stroke="#1a1a1a" stroke-width="0.5"/><rect x="271" y="186.6" width="6.4" height="4.6" fill="#6ac0e8"/>
<rect x="286.6" y="181" width="11.6" height="11" fill="#2a6aa8"/><path d="M287.8 182v9M290 182v9M292.2 182v9M294.4 182v9M296.6 182v9" stroke="#b8d4f0" stroke-width="0.6"/>
<rect x="300.4" y="182.4" width="5.4" height="10.6" fill="#111"/><rect x="301.4" y="186" width="3.4" height="3" fill="#ddd"/>
<path d="M245 195h13M245 197.4h13" stroke="#e8c040" stroke-width="0.7" stroke-dasharray="1.2 0.7"/>
<rect x="268.8" y="196.6" width="11.8" height="15.8" fill="#fd0000" stroke="#2a2a2a" stroke-width="0.6"/><rect x="270" y="198.4" width="9.4" height="2.4" fill="#8ac040"/><path d="M271 204v7M274.6 204v7M278.4 204v7" stroke="#2a2a2a" stroke-width="0.5"/>
<rect x="288.6" y="198" width="16" height="14.4" fill="#fd0000" stroke="#2a2a2a" stroke-width="0.6"/><rect x="290.4" y="200.4" width="12.4" height="2.8" fill="#1a1a1a"/><path d="M291 206v6M296.6 206v6M302 206v6" stroke="#2a2a2a" stroke-width="0.5"/><rect x="292.6" y="214.4" width="8" height="3.4" fill="#fff" stroke="#555" stroke-width="0.4"/>
<text x="373.2" y="57" font-size="3.55" fill="#1a1a1a" font-family="Liberation Sans">View from Left side (Scale 1:1)</text>
<rect x="404.8" y="57.4" width="2" height="150" fill="#111"/>
<path d="M403.3 60.0h1.5v2h-1.5zM403.8 63.0h1v4h-1zM402.2 69.0h2.6v1.5h-2.6zM403.3 71.5h1.5v2h-1.5zM402.2 75.5h2.6v4h-2.6zM403.3 80.5h1.5v2h-1.5zM402.2 84.5h2.6v2h-2.6zM403.8 88.5h1v1.5h-1zM402.8 90.5h2v1.5h-2zM402.2 92.5h2.6v3h-2.6zM402.2 97.5h2.6v4h-2.6zM403.3 102.5h1.5v4h-1.5zM403.8 107.5h1v1.5h-1zM403.3 109.5h1.5v4h-1.5zM402.8 114.5h2v4h-2zM402.8 119.5h2v4h-2zM403.3 125.5h1.5v4h-1.5zM402.8 130.5h2v1.5h-2zM402.8 134.0h2v2h-2zM403.3 138.0h1.5v1.5h-1.5zM402.8 141.5h2v3h-2zM402.2 145.0h2.6v1.5h-2.6zM403.8 148.5h1v4h-1zM402.2 153.5h2.6v1.5h-2.6zM402.8 155.5h2v1.5h-2zM403.8 158.0h1v4h-1zM402.2 162.5h2.6v1.5h-2.6zM402.8 166.0h2v3h-2zM403.8 171.0h1v2h-1zM403.8 174.0h1v1.5h-1zM403.3 176.0h1.5v1.5h-1.5zM402.8 178.5h2v3h-2zM402.8 182.0h2v1.5h-2zM403.3 184.5h1.5v3h-1.5zM402.2 188.5h2.6v4h-2.6zM403.8 194.5h1v4h-1zM402.2 200.5h2.6v3h-2.6zM402.8 205.5h2v2h-2z" fill="#2a2a2a" opacity="0.8"/>
<path d="M397 91.6H404.8" stroke="#222" stroke-width="0.5"/>
<path d="M406.8 58H416.6V93.4H406.8" fill="none" stroke="#222" stroke-width="0.6"/>
<rect x="407.6" y="61" width="4.6" height="27.4" rx="2" fill="#fff" stroke="#222" stroke-width="0.6"/>
<rect x="412.4" y="71" width="4" height="6" fill="#111"/><rect x="412.4" y="82.6" width="4" height="5" fill="#111"/>
<rect x="407.4" y="93.6" width="8" height="5.6" fill="#fff" stroke="#222" stroke-width="0.5"/><rect x="407.4" y="93.6" width="8" height="1.4" fill="#111"/>
<rect x="407" y="99" width="1.6" height="63.6" fill="#555"/>
<rect x="408.6" y="99" width="5.6" height="63.6" fill="#0a0a0a"/>
<rect x="414.2" y="99.4" width="7.4" height="63.4" fill="#fff" stroke="#333" stroke-width="0.4"/>
<path d="M414.4 101.5H421.4M414.4 103.4H421.4M414.4 105.3H421.4M414.4 107.2H421.4M414.4 109.1H421.4M414.4 111.0H421.4M414.4 112.9H421.4M414.4 114.8H421.4M414.4 116.7H421.4M414.4 118.6H421.4M414.4 120.5H421.4M414.4 122.4H421.4M414.4 124.3H421.4M414.4 126.2H421.4M414.4 128.1H421.4M414.4 130.0H421.4M414.4 131.9H421.4M414.4 133.8H421.4M414.4 135.7H421.4M414.4 137.6H421.4M414.4 139.5H421.4M414.4 141.4H421.4M414.4 143.3H421.4M414.4 145.2H421.4M414.4 147.1H421.4M414.4 149.0H421.4M414.4 150.9H421.4M414.4 152.8H421.4M414.4 154.7H421.4M414.4 156.6H421.4M414.4 158.5H421.4M414.4 160.4H421.4" stroke="#333" stroke-width="1.05"/>
<rect x="413.6" y="98.8" width="9.4" height="2.4" fill="#111"/><rect x="412" y="162.6" width="9.6" height="3" fill="#111"/>
<rect x="421.6" y="99" width="11.6" height="67" fill="#fff" stroke="#333" stroke-width="0.5"/>
<path d="M423.4 99V166M426.6 99V166M429.6 99V166M431.4 99V166" stroke="#666" stroke-width="0.45"/>
<rect x="423.6" y="103" width="9" height="4" fill="#444"/><rect x="423.6" y="157.6" width="9" height="3.6" fill="#444"/>
<rect x="406.8" y="166" width="9" height="20" fill="#fff" stroke="#333" stroke-width="0.6"/>
<rect x="407" y="175" width="5" height="4" fill="#555"/>
<rect x="406.4" y="186.2" width="9.2" height="22.6" fill="#fff" stroke="#333" stroke-width="0.6"/>
<rect x="415.6" y="187.4" width="3.6" height="20.6" fill="#fff" stroke="#444" stroke-width="0.5"/>
<rect x="411" y="198" width="3" height="10.4" rx="1.4" fill="#fff" stroke="#444" stroke-width="0.5"/>
<rect x="407.6" y="208.8" width="4" height="2.8" fill="#222"/>
<text x="486" y="56.6" font-size="3.55" fill="#1a1a1a" font-family="Liberation Sans">View from Right side (Scale 1:1)</text>
<rect x="515.2" y="56.6" width="0.7" height="152" fill="#777"/><rect x="516.6" y="56.6" width="1.3" height="152" fill="#111"/>
<path d="M517.8 58.0h2v6h-2zM517.8 66.0h1v3h-1zM517.8 70.0h1v2h-1zM517.8 72.5h2v1.5h-2zM517.8 75.0h2.8v2h-2.8zM517.8 79.0h1.5v1.5h-1.5zM517.8 81.0h2.8v2h-2.8zM517.8 84.0h2.8v2h-2.8zM517.8 86.5h1.5v1.5h-1.5zM517.8 90.0h2.8v6h-2.8zM517.8 96.5h1v2h-1zM517.8 99.0h1.5v2h-1.5zM517.8 101.5h2v2h-2zM517.8 104.5h1.5v2h-1.5zM517.8 107.0h2.8v2h-2.8zM517.8 110.0h2v1.5h-2zM517.8 112.5h1.5v2h-1.5zM517.8 115.5h2v1.5h-2zM517.8 118.0h1v6h-1zM517.8 126.0h1v3h-1zM517.8 130.0h2v3h-2zM517.8 134.0h1.5v3h-1.5zM517.8 138.0h1.5v4h-1.5zM517.8 142.5h1v3h-1zM517.8 147.5h2.8v3h-2.8zM517.8 151.0h2.8v6h-2.8zM517.8 158.0h1v4h-1zM517.8 163.0h1.5v1.5h-1.5zM517.8 166.5h1v2h-1zM517.8 169.0h2v4h-2zM517.8 175.0h2v3h-2zM517.8 179.0h2v1.5h-2zM517.8 181.5h2.8v1.5h-2.8zM517.8 183.5h2v2h-2zM517.8 187.5h2v6h-2zM517.8 194.0h2v3h-2zM517.8 199.0h1v6h-1zM517.8 206.0h2v3h-2z" fill="#2a2a2a" opacity="0.8"/>
<path d="M520 90.4H527" stroke="#222" stroke-width="0.5"/>
<rect x="506.6" y="57" width="4.4" height="10.6" rx="0.6" fill="#fff" stroke="#333" stroke-width="0.5"/>
<rect x="512.6" y="64" width="3" height="9.4" fill="#fff" stroke="#333" stroke-width="0.5"/>
<rect x="508.6" y="72" width="2.6" height="3" fill="#111"/>
<rect x="506.5" y="74.20" width="8.5" height="5.35" fill="#fff" stroke="#666" stroke-width="0.5"/>
<rect x="506.5" y="79.55" width="8.5" height="5.35" fill="#fff" stroke="#666" stroke-width="0.5"/>
<rect x="506.5" y="84.90" width="8.5" height="5.35" fill="#fff" stroke="#666" stroke-width="0.5"/>
<rect x="506.5" y="90.25" width="8.5" height="5.35" fill="#fff" stroke="#666" stroke-width="0.5"/>
<rect x="506.5" y="95.60" width="8.5" height="5.35" fill="#fff" stroke="#666" stroke-width="0.5"/>
<rect x="506.5" y="100.95" width="8.5" height="5.35" fill="#fff" stroke="#666" stroke-width="0.5"/>
<rect x="506.5" y="106.30" width="8.5" height="5.35" fill="#fff" stroke="#666" stroke-width="0.5"/>
<rect x="506.5" y="111.65" width="8.5" height="5.35" fill="#fff" stroke="#666" stroke-width="0.5"/>
<rect x="506.5" y="117.00" width="8.5" height="5.35" fill="#fff" stroke="#666" stroke-width="0.5"/>
<rect x="506.5" y="72.6" width="8.5" height="1.6" fill="#222"/>
<rect x="490" y="97.1" width="11.2" height="68.9" fill="#fff" stroke="#555" stroke-width="0.5"/>
<path d="M491.9 97V166M493.8 97V166M498.2 97V166M499.7 97V166" stroke="#888" stroke-width="0.45"/>
<path d="M490.4 104.6 Q493 101 495.6 103.6 Q498.2 106 500.8 102.6 L500.8 105.4 Q498.2 108 495.6 105.6 Q493 103.4 490.4 106z" fill="#333"/>
<rect x="490" y="154.6" width="11" height="2.4" fill="#444"/>
<rect x="501.2" y="97.1" width="5.3" height="24" fill="#f4f4f4" stroke="#555" stroke-width="0.4"/>
<rect x="501.6" y="98.2" width="4.6" height="1.6" fill="#111"/><rect x="501.6" y="109.6" width="4.6" height="1.2" fill="#111"/><path d="M501.6 103h4.6M501.6 106h4.6M501.6 113h4.6M501.6 116h4.6M501.6 119h4.6" stroke="#999" stroke-width="0.6"/>
<rect x="501.2" y="121" width="9.6" height="41.6" fill="#fff" stroke="#444" stroke-width="0.4"/>
<path d="M501.6 121.6H510.6M501.6 123.6H510.6M501.6 125.6H510.6M501.6 127.6H510.6M501.6 129.6H510.6M501.6 131.6H510.6M501.6 133.6H510.6M501.6 135.6H510.6M501.6 137.6H510.6M501.6 139.6H510.6M501.6 141.6H510.6M501.6 143.6H510.6M501.6 145.6H510.6M501.6 147.6H510.6M501.6 149.6H510.6M501.6 151.6H510.6M501.6 153.6H510.6M501.6 155.6H510.6M501.6 157.6H510.6M501.6 159.6H510.6M501.6 161.6H510.6" stroke="#444" stroke-width="1.1"/>
<rect x="510.8" y="121" width="4.4" height="41.6" fill="#fff" stroke="#555" stroke-width="0.4"/><rect x="511.8" y="127" width="2.6" height="10" fill="#fff" stroke="#555" stroke-width="0.4"/>
<rect x="501.2" y="162.4" width="6.2" height="2.6" fill="#111"/>
<rect x="507.4" y="165" width="8.4" height="42.4" fill="#fff" stroke="#333" stroke-width="0.6"/>
<rect x="503" y="187" width="4.4" height="20.4" fill="#fff" stroke="#444" stroke-width="0.5"/>
<rect x="507.6" y="201.4" width="8.2" height="6" fill="#8a8a8a"/>
<path d="M509.4 196.6q2.4-1.6 4.8 0" stroke="#555" stroke-width="0.5" fill="none"/>
<rect x="511" y="208.4" width="3.2" height="2" fill="#222"/>
<text x="239" y="239.6" font-size="3.55" fill="#1a1a1a" font-family="Liberation Sans">Component View Full Fan Mini(FULL FAN MINI) (Scale 1:1)</text>
<rect x="243.4" y="244.5" width="60.4" height="59.4" fill="none" stroke="#aaa" stroke-width="0.5"/>
<circle cx="273.7" cy="273.5" r="33.2" fill="#fff" stroke="#333" stroke-width="0.75"/>
<circle cx="273.7" cy="273.5" r="31.3" fill="none" stroke="#444" stroke-width="0.6"/>
<path d="M263.81 261.14L262.54 244.86M261.97 258.73L260.95 245.70M260.13 256.31L259.37 246.54M258.29 253.90L257.78 247.39M256.45 251.49L256.20 248.23M277.20 258.06L289.13 246.92M277.94 255.12L287.49 246.20M278.68 252.17L285.84 245.49M279.42 249.23L284.19 244.77M280.16 246.29L282.55 244.06M287.95 266.61L304.11 268.99M290.72 265.35L303.64 267.26M293.48 264.10L303.17 265.53M296.24 262.84L302.70 263.79M299.00 261.59L302.23 262.06M287.98 280.35L296.18 294.46M290.68 281.72L297.25 293.02M293.38 283.10L298.31 291.57M296.09 284.48L299.37 290.12M298.79 285.85L300.43 288.68M277.25 288.93L271.33 304.15M277.86 291.90L273.12 304.08M278.47 294.87L274.91 304.00M279.08 297.85L276.71 303.93M279.68 300.82L278.50 303.86M263.85 285.89L248.26 290.75M261.90 288.22L249.43 292.11M259.96 290.55L250.61 293.47M258.02 292.88L251.78 294.83M256.07 295.21L252.95 296.18M257.87 273.53L244.35 264.37M254.83 273.46L244.02 266.13M251.80 273.39L243.69 267.89M248.77 273.32L243.36 269.66M245.73 273.25L243.03 271.42" stroke="#555" stroke-width="0.45" fill="none"/>
<path d="M265.64 263.55L254.61 249.07M265.64 263.55L264.12 244.02M276.46 261.00L280.90 243.35M276.46 261.00L290.78 247.63M285.19 267.86L301.76 260.33M285.19 267.86L304.58 270.72M285.27 278.97L301.49 287.23M285.27 278.97L295.12 295.91M276.64 285.96L280.29 303.79M276.64 285.96L269.54 304.22M265.79 283.57L254.13 297.54M265.79 283.57L247.09 289.40M260.90 273.59L242.70 273.19M260.90 273.59L244.68 262.60" stroke="#777" stroke-width="0.5" fill="none"/>
<circle cx="273.59999999999997" cy="273.3" r="12.5" fill="#fff" stroke="#444" stroke-width="0.6"/>
<circle cx="246.2" cy="246.9" r="2.2" fill="#2a2a2a"/><circle cx="246.2" cy="246.9" r="1" fill="#aaa"/>
<circle cx="300" cy="246.9" r="2.2" fill="#2a2a2a"/><circle cx="300" cy="246.9" r="1" fill="#aaa"/>
<circle cx="246.2" cy="301.1" r="2.2" fill="#2a2a2a"/><circle cx="246.2" cy="301.1" r="1" fill="#aaa"/>
<circle cx="300" cy="301.1" r="2.2" fill="#2a2a2a"/><circle cx="300" cy="301.1" r="1" fill="#aaa"/>
<rect x="238.8" y="240.2" width="69.2" height="68.3" fill="none" stroke="#1a22f0" stroke-width="1.1" stroke-dasharray="2.1 1.1"/>
<rect x="306.8" y="239" width="2.4" height="2.4" fill="#4a5ae0"/>
<path d="M207.4 39.6v1.8M207.4 319.8v1.8M207.4 327.6v1.8M286.9 39.6v1.8M286.9 319.8v1.8M286.9 327.6v1.8M366.4 39.6v1.8M366.4 319.8v1.8M366.4 327.6v1.8M445.9 39.6v1.8M445.9 319.8v1.8M445.9 327.6v1.8M525.4 39.6v1.8M525.4 319.8v1.8M525.4 327.6v1.8M165.8 76.3h1.8M563.4 76.3h1.8M165.8 146.0h1.8M563.4 146.0h1.8M165.8 215.7h1.8M563.4 215.7h1.8M165.8 285.4h1.8M563.4 285.4h1.8" stroke="#5a6a80" stroke-width="0.8"/>
<path d="M247.1 39.6v1.8M247.1 319.8v1.8M247.1 327.6v1.8M326.6 39.6v1.8M326.6 319.8v1.8M326.6 327.6v1.8M406.1 39.6v1.8M406.1 319.8v1.8M406.1 327.6v1.8M485.6 39.6v1.8M485.6 319.8v1.8M485.6 327.6v1.8M165.8 111.0h1.8M563.4 111.0h1.8M165.8 180.7h1.8M563.4 180.7h1.8M165.8 250.4h1.8M563.4 250.4h1.8" stroke="#bbb" stroke-width="0.8"/>
<text x="183.4" y="385.6" font-size="3.55" fill="#1a1a1a" font-family="Liberation Sans">1. Top (Scale 1:1)</text>
<text x="378" y="385.6" font-size="3.55" fill="#1a1a1a" font-family="Liberation Sans">10. Bottom (Scale 1:1)</text>
<rect x="309.9" y="38.1" width="104.6" height="11.9" rx="1.6" fill="#3b3b3b"/>
<rect x="316.1" y="41.0" width="4.4" height="6" fill="none" stroke="#d08a28" stroke-width="0.8"/>
<path d="M328.3 46.8l3-5.6h1.6M330.9 46.8l2.6-4.6" stroke="#e0c020" stroke-width="1.2" fill="none"/><path d="M330.9 47.2h3v-4z" fill="#4aa830"/>
<path d="M340.5 45.8h6l-1-2.6h-4z" fill="#4aa0e0"/><path d="M341.5 43.2h4l-0.8-1.8h-2.4z" fill="#5ab040"/>
<circle cx="356.1" cy="44.0" r="2.6" fill="none" stroke="#c8801e" stroke-width="0.8"/><circle cx="356.1" cy="44.0" r="0.6" fill="#3a6ab0"/>
<path d="M366.1 41.4v5.2h5.2v-5.2" stroke="#4a8ad8" stroke-width="1" fill="none"/><path d="M367.3 41.4l1.4 2 1.4-2" stroke="#d09030" stroke-width="0.6" fill="none"/>
<path d="M378.3 46.2l2.4-1.6h1.6l2.2-2.6" stroke="#3a8ae0" stroke-width="0.8" fill="none"/><circle cx="381.1" cy="44.6" r="0.9" fill="#3a8ae0"/>
<rect x="390.9" y="41.2" width="6" height="5.6" fill="#f0f0f0"/><rect x="390.9" y="41.2" width="6" height="1.6" fill="#3a8ae0"/><rect x="391.9" y="44.0" width="4" height="1" fill="#888"/>
<path d="M403.7 46.8L409.3 41.2" stroke="#3a8ae0" stroke-width="0.9"/>
<path d="M322.9 49.0h1.2v-1.2zM335.5 49.0h1.2v-1.2zM348.1 49.0h1.2v-1.2zM360.7 49.0h1.2v-1.2zM373.3 49.0h1.2v-1.2zM385.9 49.0h1.2v-1.2zM398.5 49.0h1.2v-1.2zM411.1 49.0h1.2v-1.2z" fill="#ddd"/>
<!--CANVAS-->
</svg>
<div class="a" style="left:567px;top:23px;width:3px;height:363px;background:#2d2d2d"></div>

<!-- RIGHT PANEL -->
<div class="a" style="left:569.5px;top:23px;width:183.5px;height:363.2px;background:#3d3d3d"></div>
<div class="a" style="left:751.2px;top:23px;width:1.8px;height:363.2px;background:#303030"></div>
<div class="a" style="left:569.5px;top:24.2px;width:181.7px;height:11.8px;background:#6587a9"></div>
<div class="t" style="left:573px;top:28.2px;font-size:5.4px;font-weight:bold;color:#f2f2f2">Properties</div>
<svg class="a" style="left:726px;top:26px" width="25" height="9"><path d="M1.8 3.8h2.4l-1.2 1.3z" fill="#eee"/><rect x="10.6" y="2.6" width="1.8" height="3.2" fill="#eee"/><path d="M17.6 2.6 L20 5.4 M20 2.6 L17.6 5.4" stroke="#eee" stroke-width="0.8"/></svg>
<div class="t" style="left:574px;top:42.4px;font-size:5.4px;color:#c6c6c6">Component View</div>
<div class="a" style="left:574px;top:53.4px;width:172.7px;height:10.4px;background:#2b2b2b;border-radius:1.5px"></div>
<svg class="a" style="left:576px;top:55px" width="8" height="8"><circle cx="3.4" cy="3.4" r="1.8" stroke="#c8c8c8" stroke-width="0.8" fill="none"/><path d="M4.7 4.7 L6 6" stroke="#c8c8c8" stroke-width="0.8"/></svg>
<div class="t" style="left:585px;top:56.2px;font-size:5.3px;color:#bdbdbd">Search</div>
<!-- scale -->
<svg class="a" style="left:572px;top:70.8px" width="6" height="6"><path d="M2.4 4.6 L4.4 2.6 V4.6z" fill="#ddd"/></svg>
<div class="t" style="left:578px;top:71.4px;font-size:5.4px;font-weight:bold;color:#e8e8e8">Scale</div>
<div class="a" style="left:574px;top:77.5px;width:172.7px;height:51.2px;background:#464646"></div>
<div class="t" style="left:593.4px;top:87.2px;font-size:4.95px;color:#cfcfcf">Scale</div>
<div class="a" style="left:611.4px;top:83.4px;width:131px;height:11.3px;background:#595959;border:0.7px solid #7b9fc2;border-radius:1px"></div>
<div class="t" style="left:614.4px;top:87.4px;font-size:5.3px;color:#e0e0e0">1:1</div>
<svg class="a" style="left:735px;top:86px" width="6" height="5"><path d="M1 1.4 h3.2 l-1.6 1.8z" fill="#eee"/></svg>
<div class="a" style="left:576.9px;top:99.8px;width:166px;height:0.8px;background:#2e2e2e"></div>
<div class="a" style="left:611.5px;top:106.4px;width:7px;height:7px;background:#555;border:0.7px solid #333;border-radius:1px"></div>
<div class="t" style="left:621.3px;top:107.6px;font-size:5.3px;color:#c6c6c6">Use Custom Scale</div>
<div class="a" style="left:611.5px;top:115.8px;width:131px;height:9.5px;background:#383838;border-radius:1px"></div>
<div class="t" style="left:614.4px;top:118.4px;font-size:5.2px;color:#777">1</div>
<div class="a" style="left:569px;top:77.3px;width:177.7px;height:20.6px;border:2px solid #f41c1c;border-radius:2.4px"></div>
<div class="a" style="left:645.6px;top:69px;width:13px;height:13.4px;background:rgba(220,80,80,0.22);border-radius:1px"></div>
<svg class="a" style="left:646.2px;top:69px" width="12" height="13"><circle cx="6" cy="6.4" r="3.2" fill="none" stroke="rgba(170,50,50,0.45)" stroke-width="0.9"/></svg>
<!-- title, style -->
<svg class="a" style="left:572px;top:138px" width="6" height="6"><path d="M2.4 1.6 L4.2 3 L2.4 4.4z" fill="#ddd"/></svg>
<div class="t" style="left:578px;top:138.4px;font-size:5.4px;font-weight:bold;color:#e8e8e8">Title</div>
<svg class="a" style="left:572px;top:153.4px" width="6" height="6"><path d="M2.4 1.6 L4.2 3 L2.4 4.4z" fill="#ddd"/></svg>
<div class="t" style="left:578px;top:153.6px;font-size:5.4px;font-weight:bold;color:#e8e8e8">Style</div>
<svg class="a" style="left:572px;top:168.4px" width="6" height="6"><path d="M2.4 4.6 L4.4 2.6 V4.6z" fill="#ddd"/></svg>
<div class="t" style="left:578px;top:168.8px;font-size:5.4px;font-weight:bold;color:#e8e8e8">Properties</div>
<div class="a" style="left:574px;top:177.9px;width:172.7px;height:87.5px;background:#464646"></div>
<div class="t" style="left:577.4px;top:184px;font-size:5.3px;color:#cfcfcf">Component</div>
<div class="a" style="left:611.4px;top:181.3px;width:131px;height:9.7px;background:#2f2f2f;border-radius:1px"></div>
<div class="t" style="left:613.6px;top:184px;font-size:5.3px;color:#e0e0e0">M1 - Full Fan Mini (FULL FAN MINI)</div>
<svg class="a" style="left:735px;top:183.6px" width="6" height="5"><path d="M1 1.4 h3.2 l-1.6 1.8z" fill="#eee"/></svg>
<div class="t" style="left:582.4px;top:196.8px;font-size:5.3px;color:#cfcfcf">View Side</div>
<div class="a" style="left:611.4px;top:194.4px;width:131px;height:10.2px;background:#575757;border-radius:1px"></div>
<div class="t" style="left:613.6px;top:197.6px;font-size:5.3px;color:#e6e6e6">Top</div>
<svg class="a" style="left:735px;top:197px" width="6" height="5"><path d="M1 1.4 h3.2 l-1.6 1.8z" fill="#eee"/></svg>
<div class="a" style="left:580.2px;top:193.5px;width:164.4px;height:12px;border:2px solid #f41c1c;border-radius:2.4px"></div>
<div class="t" style="left:585.2px;top:210.6px;font-size:5.3px;color:#c6c6c6">Rotation</div>
<div class="a" style="left:611.4px;top:208px;width:131px;height:10.2px;background:#525252;border-radius:1px"></div>
<div class="t" style="left:613.6px;top:211px;font-size:5.3px;color:#e0e0e0">0°</div>
<svg class="a" style="left:735px;top:210.4px" width="6" height="5"><path d="M1 1.4 h3.2 l-1.6 1.8z" fill="#eee"/></svg>
<div class="t" style="left:577.4px;top:225.6px;font-size:5.3px;color:#cfcfcf">Show Pads</div>
<div class="a" style="left:577px;top:233.2px;width:166px;height:0.8px;background:#2a2a2a"></div>
<div class="a" style="left:611.5px;top:241px;width:7px;height:7px;background:#555;border:0.7px solid #333;border-radius:1px"></div>
<div class="a" style="left:621.6px;top:241px;width:7.4px;height:7px;background:#2b92c8;border:0.7px solid #333"></div>
<div class="t" style="left:633.8px;top:242.6px;font-size:5.3px;color:#9a9a9a">SMD</div>
<div class="a" style="left:611.5px;top:253.8px;width:7px;height:7px;background:#555;border:0.7px solid #333;border-radius:1px"></div>
<div class="a" style="left:621.6px;top:253.8px;width:7.4px;height:7px;background:#6aa84f;border:0.7px solid #333"></div>
<div class="t" style="left:633.8px;top:255.4px;font-size:5.3px;color:#9a9a9a">Through-Hole</div>
<div class="t" style="left:574px;top:379.4px;font-size:5.3px;color:#c6c6c6">1 object is selected</div>

<!-- status bar -->
<div class="a" style="left:0;top:386.2px;width:753px;height:13px;background:#404040"></div>
<div class="t" style="left:2.5px;top:391.6px;font-size:5.45px;color:#d0d0d0">X: 412.371mm, Y: 163.811mm</div>
<div class="t" style="left:82px;top:391.6px;font-size:5.45px;color:#d0d0d0">Grid: 1.000mm</div>
<div class="a" style="left:381px;top:386.2px;width:0.8px;height:13px;background:#2e2e2e"></div>
<div class="t" style="left:383.7px;top:391.6px;font-size:5.2px;color:#d0d0d0">Snapping: Enabled</div>
<div class="a" style="left:730.5px;top:389.6px;width:20px;height:8.8px;background:#4c4c4c"></div>
<div class="t" style="left:732.2px;top:392px;font-size:5.6px;color:#e0e0e0">Panels</div>
<div class="a" style="left:0;top:399.2px;width:753px;height:4.8px;background:#060608"></div>
<div class="a" style="left:0;top:403.2px;width:753px;height:0.8px;background:#b8b8b8"></div>
</body></html>
